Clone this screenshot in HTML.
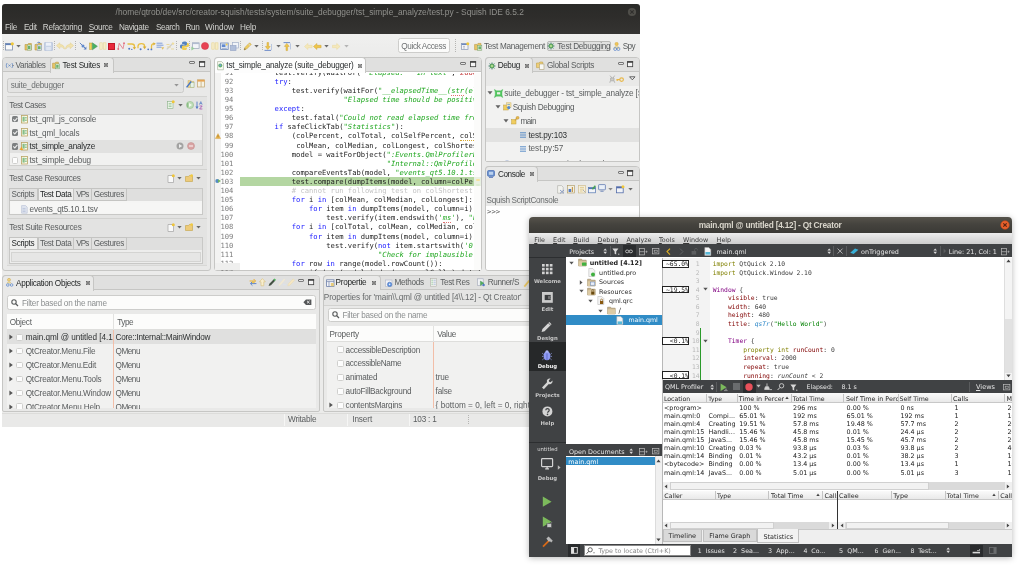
<!DOCTYPE html>
<html><head><meta charset="utf-8"><title>Squish IDE and Qt Creator</title>
<style>
html,body{margin:0;padding:0;background:#fff}
body{width:1024px;height:565px;position:relative;overflow:hidden;font-family:"Liberation Sans",sans-serif;font-size:8.2px;color:#555;line-height:12px}
div,span{box-sizing:border-box}
#root{position:absolute;left:0;top:0;width:1024px;height:565px;overflow:hidden;will-change:transform}
svg{overflow:visible}
.si{opacity:.86}
.t{position:absolute;white-space:pre;line-height:12px}
.c{position:absolute;white-space:pre;font-family:"DejaVu Sans Mono","Liberation Mono",monospace;font-size:7.16px;line-height:10px;color:#1c1c1c}
.c b.kw{font-weight:normal;color:#1a1aff}
.c i.st{color:#22a822}
.c .sq{border-bottom:0.7px dotted #e07070}
.c .sqy{border-bottom:0.7px dotted #d8a830}
.ln{position:absolute;left:214px;width:19.4px;text-align:right;white-space:pre;font-family:"DejaVu Sans Mono","Liberation Mono",monospace;font-size:7.16px;line-height:10px;color:#7c7c7c}

.q{position:absolute;white-space:pre;font-family:"DejaVu Sans Mono","Liberation Mono",monospace;font-size:6.34px;line-height:9px;color:#3a3a3a}
.q .o{color:#808000}.q .p{color:#800080}.q .r{color:#800000}.q .b{color:#2985c7;font-style:italic}.q .g{color:#008000}
.qn{position:absolute;left:689.5px;width:10px;text-align:right;white-space:pre;font-family:"DejaVu Sans Mono","Liberation Mono",monospace;font-size:6.34px;line-height:9px;color:#b8b8b8}
</style></head><body>
<div id="root">
<div style="position:absolute;left:2px;top:4px;width:638px;height:423px;background:#ebebea;border-radius:3px 3px 0 0"></div>
<div style="position:absolute;left:2px;top:4px;width:638px;height:30px;background:linear-gradient(#2a2a28,#2e2d2b 45%,#353432);border-radius:3px 3px 0 0"></div>
<span class="t" style="left:115.60px;color:#90908c;letter-spacing:-0.009px;top:6px;font-size:8.4px;">/home/qtrob/dev/src/creator-squish/tests/system/suite_debugger/tst_simple_analyze/test.py - Squish IDE 6.5.2</span>
<svg class="si" style="position:absolute;left:627.3px;top:7px" width="10" height="10" viewBox="0 0 10 10"><circle cx="5" cy="5" r="4.1" fill="#55544f"/><path d="M3.3 3.3l3.4 3.4M6.7 3.3l-3.4 3.4" stroke="#302f2d" stroke-width="1.1"/></svg>
<span class="t" style="left:5.00px;color:#d2d2cf;letter-spacing:-0.301px;top:22px;font-size:8.2px;">File</span>
<span class="t" style="left:24.00px;color:#d2d2cf;letter-spacing:-0.402px;top:22px;font-size:8.2px;">Edit</span>
<span class="t" style="left:42.80px;color:#d2d2cf;letter-spacing:-0.245px;top:22px;font-size:8.2px;">Refac<u>t</u>oring</span>
<span class="t" style="left:88.75px;color:#d2d2cf;letter-spacing:-0.367px;top:22px;font-size:8.2px;"><u>S</u>ource</span>
<span class="t" style="left:119.00px;color:#d2d2cf;letter-spacing:-0.322px;top:22px;font-size:8.2px;">Navigate</span>
<span class="t" style="left:156.00px;color:#d2d2cf;letter-spacing:-0.426px;top:22px;font-size:8.2px;">Search</span>
<span class="t" style="left:185.60px;color:#d2d2cf;letter-spacing:-0.410px;top:22px;font-size:8.2px;">Run</span>
<span class="t" style="left:205.00px;color:#d2d2cf;letter-spacing:-0.062px;top:22px;font-size:8.2px;">Window</span>
<span class="t" style="left:240.00px;color:#d2d2cf;letter-spacing:-0.211px;top:22px;font-size:8.2px;">Help</span>
<div style="position:absolute;left:2px;top:34px;width:638px;height:23.5px;background:linear-gradient(#f0f0ef,#ebebea)"></div>
<div style="position:absolute;left:2.8px;top:41px;width:1px;height:10px;background:repeating-linear-gradient(#b4b4b2 0 1px,transparent 1px 2px)"></div><svg class="si" style="position:absolute;left:5.1px;top:41.6px" width="9" height="9" viewBox="0 0 9 9"><rect x="0.5" y="1.5" width="7" height="6.5" fill="#fdfdfd" stroke="#6c7fa0" stroke-width="0.8"/><rect x="0.5" y="1.5" width="7" height="1.6" fill="#4a6fb0"/><circle cx="7.3" cy="1.8" r="1.6" fill="#f2c21c"/></svg><svg class="si" style="position:absolute;left:15.8px;top:43.9px" width="5" height="5" viewBox="0 0 5 5"><path d="M0.3 1h4.4L2.5 3.6z" fill="#555"/></svg><svg class="si" style="position:absolute;left:24px;top:41.6px" width="9" height="9" viewBox="0 0 9 9"><path d="M1 2.5h2.6l0.8-1h3v6.5h-6.4z" fill="#e8c050" stroke="#b08a28" stroke-width="0.6"/><rect x="3.2" y="3" width="4" height="5" fill="#e9f5e4" stroke="#6a9a60" stroke-width="0.6"/><rect x="4" y="4" width="2.4" height="3" fill="#58a858"/></svg><svg class="si" style="position:absolute;left:34px;top:41.6px" width="9" height="9" viewBox="0 0 9 9"><path d="M1 2.5h2.6l0.8-1h3v6.5h-6.4z" fill="#e8c050" stroke="#b08a28" stroke-width="0.6"/><rect x="3.2" y="3" width="4.4" height="5.2" fill="#eef3fb" stroke="#7a8fb0" stroke-width="0.6"/><rect x="4" y="4.2" width="2.6" height="3" fill="#58a858"/><path d="M3 1.3a2 2 0 0 1 3.5 0" stroke="#3a62b0" stroke-width="0.9" fill="none"/></svg><svg class="si" style="position:absolute;left:43.8px;top:41.6px" width="9" height="9" viewBox="0 0 9 9"><rect x="0.7" y="0.7" width="7.6" height="7.6" fill="#c4d0e6" stroke="#a4b4d4" stroke-width="0.7"/><rect x="2" y="0.7" width="5" height="3" fill="#eef2fa"/><rect x="2.2" y="5" width="4.6" height="3.3" fill="#dfe6f4"/></svg><div style="position:absolute;left:53.8px;top:41px;width:1px;height:10px;background:repeating-linear-gradient(#b4b4b2 0 1px,transparent 1px 2px)"></div><svg class="si" style="position:absolute;left:55.8px;top:42.1px" width="9" height="8" viewBox="0 0 9 8"><path d="M0.5 3.6L3.8 0.8v1.8c3 0 4.6 1.4 4.6 4.6c-1-1.8-2.4-2.4-4.6-2.4v1.8z" fill="#f3e3a8" stroke="#e0c878" stroke-width="0.5"/></svg><svg class="si" style="position:absolute;left:64.8px;top:42.1px" width="9" height="8" viewBox="0 0 9 8"><path d="M8.5 3.6L5.2 0.8v1.8c-3 0-4.6 1.4-4.6 4.6c1-1.8 2.4-2.4 4.6-2.4v1.8z" fill="#f3e3a8" stroke="#e0c878" stroke-width="0.5"/></svg><div style="position:absolute;left:75.1px;top:41px;width:1px;height:10px;background:repeating-linear-gradient(#b4b4b2 0 1px,transparent 1px 2px)"></div><svg class="si" style="position:absolute;left:78.5px;top:42.1px" width="8" height="8" viewBox="0 0 8 8"><path d="M0.8 0.8l6.2 6.2" stroke="#3a68b8" stroke-width="0.9"/><path d="M4.6 7.4l2.8 0-0-2.8z" fill="#3a68b8"/><circle cx="4" cy="4" r="1.5" fill="#4a7ac8"/></svg><svg class="si" style="position:absolute;left:88.5px;top:41.8px" width="9" height="8.6" viewBox="0 0 9 8.6"><rect x="0.5" y="1" width="2.4" height="6.5" fill="#f0d040" stroke="#b09020" stroke-width="0.5"/><path d="M3.4 0.8v7l5-3.5z" fill="#2fa84a" stroke="#1f7a34" stroke-width="0.5"/></svg><svg class="si" style="position:absolute;left:98.7px;top:42.1px" width="8" height="8" viewBox="0 0 8 8"><rect x="0.8" y="0.8" width="2.4" height="6.4" fill="#f8efc4" stroke="#e6d48a" stroke-width="0.6"/><rect x="4.6" y="0.8" width="2.4" height="6.4" fill="#f8efc4" stroke="#e6d48a" stroke-width="0.6"/></svg><div style="position:absolute;left:108.2px;top:42.7px;width:7px;height:7px;background:#e8283c;border:0.6px solid #c01828"></div><svg class="si" style="position:absolute;left:116.7px;top:41.85px" width="8" height="8.5" viewBox="0 0 8 8.5"><path d="M1 7.3l1.2-6 3.8 5.4 1.2-5.6" stroke="#e0566a" stroke-width="0.75" fill="none"/><circle cx="1.3" cy="7" r="0.9" fill="#e0566a"/><circle cx="7" cy="1.2" r="0.9" fill="#e0566a"/></svg><svg class="si" style="position:absolute;left:126.5px;top:41.8px" width="10" height="8.6" viewBox="0 0 10 8.6"><path d="M0.5 2h4.5c2 0 2.5 1 2.5 2.5v1.6" stroke="#e8b828" stroke-width="1.3" fill="none"/><path d="M5.6 5.2h3.6l-1.8 2.4z" fill="#d8a418"/><circle cx="2.2" cy="6.8" r="1" fill="#3a66c0"/><circle cx="4.8" cy="7.4" r="0.7" fill="#3a66c0"/></svg><svg class="si" style="position:absolute;left:136.5px;top:41.8px" width="10" height="8.6" viewBox="0 0 10 8.6"><path d="M1 6.2v-2c0-1.8 1.2-2.6 3.4-2.6c2 0 3.2 0.8 3.2 2.6v1" stroke="#e8b828" stroke-width="1.3" fill="none"/><path d="M5.8 4.6h3.6l-1.8 2.6z" fill="#d8a418"/><circle cx="3.6" cy="7.2" r="1" fill="#3a66c0"/></svg><svg class="si" style="position:absolute;left:146.5px;top:41.8px" width="9" height="8.6" viewBox="0 0 9 8.6"><path d="M4.5 7v-3c0-1.6 1-2.4 2.8-2.4" stroke="#e8b828" stroke-width="1.3" fill="none"/><path d="M6.4 0.2l2.4 1.6-2.4 1.6z" fill="#d8a418"/><circle cx="1.2" cy="7.3" r="0.9" fill="#3a66c0"/><circle cx="4.4" cy="7.4" r="0.9" fill="#3a66c0"/></svg><svg class="si" style="position:absolute;left:156.2px;top:41.9px" width="8.6" height="8.4" viewBox="0 0 8.6 8.4"><path d="M0.5 1.2h6M0.5 3.2h7M0.5 5.2h5" stroke="#6a90d8" stroke-width="1"/><path d="M5.2 5.2h3l-1.5 2.6z" fill="#e0b84a"/></svg><svg class="si" style="position:absolute;left:165.7px;top:41.9px" width="8.6" height="8.4" viewBox="0 0 8.6 8.4"><path d="M0.8 7.4l6.4-6.4" stroke="#c8c8c4" stroke-width="1.2"/><path d="M0.5 2.5h3M1 5h4M5 7h3" stroke="#e8d490" stroke-width="1"/><circle cx="7" cy="1.6" r="1.2" fill="#f0dc90"/></svg><div style="position:absolute;left:176.3px;top:41px;width:1px;height:10px;background:repeating-linear-gradient(#b4b4b2 0 1px,transparent 1px 2px)"></div><svg class="si" style="position:absolute;left:179.5px;top:41.35px" width="9" height="9.5" viewBox="0 0 9 9.5"><path d="M4.3 0.5c-2 0-2.2 0.8-2.2 1.6v1h2.4v0.5h-3.2c-1 0-1.3 0.9-1.3 2c0 1.2 0.4 2 1.3 2h0.8v-1.3c0-0.9 0.7-1.5 1.5-1.5h2.3c0.7 0 1.2-0.5 1.2-1.2v-1.5c0-0.9-0.9-1.6-2.8-1.6z" fill="#3a70b8"/><path d="M4.7 9c2 0 2.2-0.8 2.2-1.6v-1h-2.4v-0.5h3.2c1 0 1.3-0.9 1.3-2c0-1.2-0.4-2-1.3-2h-0.8v1.3c0 0.9-0.7 1.5-1.5 1.5h-2.3c-0.7 0-1.2 0.5-1.2 1.2v1.5c0 0.9 0.9 1.6 2.8 1.6z" fill="#f0c838"/></svg><div style="position:absolute;left:188.7px;top:41px;width:1px;height:10px;background:repeating-linear-gradient(#b4b4b2 0 1px,transparent 1px 2px)"></div><svg class="si" style="position:absolute;left:191px;top:41.6px" width="9" height="9" viewBox="0 0 9 9"><rect x="1.5" y="0.8" width="6.6" height="5.8" fill="#f4f6fa" stroke="#8a96b0" stroke-width="0.7"/><rect x="1.5" y="0.8" width="6.6" height="1.3" fill="#a8b4cc"/><path d="M0.4 4.4v4l3.2-2z" fill="#8cc890"/></svg><svg class="si" style="position:absolute;left:201.4px;top:42.1px" width="8" height="8" viewBox="0 0 8 8"><circle cx="4" cy="4" r="3.6" fill="#e8283c" stroke="#c41828" stroke-width="0.5"/></svg><svg class="si" style="position:absolute;left:211px;top:42.1px" width="8" height="8" viewBox="0 0 8 8"><rect x="0.8" y="0.8" width="2.4" height="6.4" fill="#f8ecc0" stroke="#e8d488" stroke-width="0.6"/><rect x="4.6" y="0.8" width="2.4" height="6.4" fill="#f8ecc0" stroke="#e8d488" stroke-width="0.6"/></svg><svg class="si" style="position:absolute;left:220.2px;top:41.9px" width="9" height="8.4" viewBox="0 0 9 8.4"><rect x="0.6" y="1" width="7.6" height="6.4" fill="#dfe8f6" stroke="#5a78b0" stroke-width="0.8"/><rect x="1.8" y="2.4" width="3.6" height="2.6" fill="#4a78c8"/><circle cx="6.6" cy="2.6" r="1" fill="#f0c838"/><path d="M1.8 6.4h5" stroke="#7a90b8" stroke-width="0.7"/></svg><svg class="si" style="position:absolute;left:230.2px;top:41.6px" width="9.2" height="9" viewBox="0 0 9.2 9"><rect x="2.6" y="0.6" width="6" height="5.4" fill="#f2f5fa" stroke="#98a6c4" stroke-width="0.7"/><rect x="0.6" y="3.6" width="5.4" height="4.8" fill="#a8b8d8" stroke="#8a9cc0" stroke-width="0.7"/></svg><div style="position:absolute;left:240.3px;top:41px;width:1px;height:10px;background:repeating-linear-gradient(#b4b4b2 0 1px,transparent 1px 2px)"></div><svg class="si" style="position:absolute;left:242.5px;top:41.6px" width="9" height="9" viewBox="0 0 9 9"><path d="M1 8l1-2.6 4.6-4.6 1.6 1.6-4.6 4.6z" fill="#f0c84a" stroke="#c09828" stroke-width="0.6"/><path d="M1 8l0.7-1.9 1.2 1.2z" fill="#6a5a3a"/><path d="M5.4 1.8l1.6 1.6" stroke="#d8d8d8" stroke-width="1"/></svg><svg class="si" style="position:absolute;left:253.8px;top:43.9px" width="5" height="5" viewBox="0 0 5 5"><path d="M0.3 1h4.4L2.5 3.6z" fill="#555"/></svg><div style="position:absolute;left:262.2px;top:41px;width:1px;height:10px;background:repeating-linear-gradient(#b4b4b2 0 1px,transparent 1px 2px)"></div><svg class="si" style="position:absolute;left:263.5px;top:41.5px" width="8.4" height="9.2" viewBox="0 0 8.4 9.2"><path d="M3 0.5h1.6v4h1.6l-2.4 3-2.4-3h1.6z" fill="#f0c030" stroke="#c89818" stroke-width="0.5"/><path d="M0.5 8.4h6.6" stroke="#4a70c0" stroke-width="0.9"/><path d="M7.6 2v6" stroke="#9ab0d8" stroke-width="0.8"/></svg><svg class="si" style="position:absolute;left:275.5px;top:43.9px" width="5" height="5" viewBox="0 0 5 5"><path d="M0.3 1h4.4L2.5 3.6z" fill="#555"/></svg><svg class="si" style="position:absolute;left:282.6px;top:41.5px" width="8.4" height="9.2" viewBox="0 0 8.4 9.2"><path d="M3 8.6h1.6v-4.2h1.6l-2.4-3-2.4 3h1.6z" fill="#f0c030" stroke="#c89818" stroke-width="0.5"/><path d="M0.5 0.6h6.6" stroke="#4a70c0" stroke-width="0.9"/><path d="M7.6 1.4v6" stroke="#9ab0d8" stroke-width="0.8"/></svg><svg class="si" style="position:absolute;left:295px;top:43.9px" width="5" height="5" viewBox="0 0 5 5"><path d="M0.3 1h4.4L2.5 3.6z" fill="#555"/></svg><svg class="si" style="position:absolute;left:303.7px;top:42.6px" width="8.6" height="7" viewBox="0 0 8.6 7"><path d="M0.5 3.5l3.4-3v1.8h4.2v2.4h-4.2v1.8z" fill="#f6e8b4" stroke="#e8d48c" stroke-width="0.5"/></svg><svg class="si" style="position:absolute;left:312.7px;top:42.6px" width="8.6" height="7" viewBox="0 0 8.6 7"><path d="M0.5 3.5l3.4-3v1.8h4.2v2.4h-4.2v1.8z" fill="#f0c030" stroke="#c89818" stroke-width="0.5"/></svg><svg class="si" style="position:absolute;left:323.8px;top:43.9px" width="5" height="5" viewBox="0 0 5 5"><path d="M0.3 1h4.4L2.5 3.6z" fill="#555"/></svg><svg class="si" style="position:absolute;left:331.9px;top:42.6px" width="8.6" height="7" viewBox="0 0 8.6 7"><path d="M8.1 3.5l-3.4-3v1.8h-4.2v2.4h4.2v1.8z" fill="#f6e8b4" stroke="#e8d48c" stroke-width="0.5"/></svg><svg class="si" style="position:absolute;left:343.5px;top:43.9px" width="5" height="5" viewBox="0 0 5 5"><path d="M0.3 1h4.4L2.5 3.6z" fill="#aaa"/></svg><div style="position:absolute;left:397.5px;top:38px;width:52.2px;height:15px;background:#fbfbfa;border:1px solid #cdcdcb;border-radius:2.5px"></div><span class="t" style="left:401.30px;color:#6e7172;letter-spacing:-0.370px;top:41px;font-size:8.2px;">Quick Access</span><div style="position:absolute;left:454.5px;top:39px;width:1px;height:14px;background:repeating-linear-gradient(#b4b4b2 0 1px,transparent 1px 2px)"></div><svg class="si" style="position:absolute;left:461px;top:41.8px" width="8.6" height="8.6" viewBox="0 0 8.6 8.6"><rect x="0.6" y="1.6" width="6.4" height="6" fill="#f4f6fa" stroke="#7888a8" stroke-width="0.7"/><rect x="0.6" y="1.6" width="6.4" height="1.4" fill="#5878b8"/><path d="M2 4.4h2M2 6h2" stroke="#889" stroke-width="0.6"/><circle cx="6.8" cy="1.8" r="1.5" fill="#f2c21c"/></svg><svg class="si" style="position:absolute;left:473.7px;top:41.7px" width="8.6" height="8.8" viewBox="0 0 8.6 8.8"><path d="M0.6 2.4h2.6l0.8-1h3v6.4h-6.4z" fill="#e8c050" stroke="#b08a28" stroke-width="0.6"/><rect x="3.6" y="3.4" width="4.2" height="4.8" fill="#e9f5e4" stroke="#6a9a60" stroke-width="0.6"/><rect x="4.4" y="4.4" width="2.6" height="2.8" fill="#58a858"/></svg><span class="t" style="left:484.00px;color:#5a5d5e;letter-spacing:-0.273px;top:41px;font-size:8.2px;">Test Management</span><div style="position:absolute;left:547px;top:41px;width:64px;height:9.8px;border:1px solid #b9b9b7;border-radius:2px;background:#e1e1e0"></div><svg class="si" style="position:absolute;left:547.3px;top:41.8px" width="8" height="8" viewBox="0 0 8 8"><path d="M4 0.3v7.4M0.3 4h7.4M1.4 1.4l5.2 5.2M6.6 1.4l-5.2 5.2" stroke="#3a7a6a" stroke-width="0.7"/><circle cx="4" cy="4" r="2.3" fill="#58b048" stroke="#2a6a5a" stroke-width="0.5"/><circle cx="4" cy="4" r="0.9" fill="#c8e8a0"/></svg><span class="t" style="left:557.30px;color:#5a5d5e;letter-spacing:-0.279px;top:41px;font-size:8.2px;">Test Debugging</span><svg class="si" style="position:absolute;left:612.8px;top:41.6px" width="7.6" height="9" viewBox="0 0 7.6 9"><circle cx="3.6" cy="2" r="1.7" fill="#f0c040" stroke="#c09020" stroke-width="0.4"/><path d="M1.2 5.4c0-1.6 4.8-1.6 4.8 0v1h-4.8z" fill="#f6e6a8" stroke="#d0b060" stroke-width="0.4"/><circle cx="2.2" cy="7" r="1.5" fill="none" stroke="#4a78c8" stroke-width="0.8"/><circle cx="5.4" cy="7" r="1.5" fill="none" stroke="#4a78c8" stroke-width="0.8"/></svg><span class="t" style="left:622.70px;color:#5a5d5e;letter-spacing:-0.603px;top:41px;font-size:8.2px;">Spy</span>
<div style="position:absolute;left:2.4px;top:57.2px;width:208.2px;height:214.2px;background:#e9e9e8;border:1px solid #c6c6c4;border-radius:4px 4px 3px 3px"></div><div style="position:absolute;left:3.4px;top:58.2px;width:206.2px;height:14px;background:#e0e0df;border-bottom:1px solid #c6c6c4;border-radius:3px 3px 0 0"></div><div style="position:absolute;left:50.2px;top:57.2px;width:64.2px;height:16px;background:#e9e9e8;border:1px solid #c6c6c4;border-bottom:none;border-radius:4px 4px 0 0"></div><svg class="si" style="position:absolute;left:4.8px;top:61.7px" width="9" height="7" viewBox="0 0 9 7"><path d="M2.2 1c-1.2 1.2-1.2 3.8 0 5M6.8 1c1.2 1.2 1.2 3.8 0 5" stroke="#4a78c0" stroke-width="0.8" fill="none"/><path d="M3.4 2.6l2.2 1.8M5.6 2.6l-2.2 1.8" stroke="#4a78c0" stroke-width="0.7"/><path d="M7.4 3.5h1.4" stroke="#666" stroke-width="0.8"/></svg><span class="t" style="left:15.60px;color:#5a5d5e;letter-spacing:-0.403px;top:60px;font-size:8.2px;">Variables</span><svg class="si" style="position:absolute;left:52.1px;top:61.1px" width="8.4" height="8.4" viewBox="0 0 8.4 8.4"><path d="M0.6 2.2h2.4l0.8-1h2.6v6h-5.8z" fill="#e8c050" stroke="#b08a28" stroke-width="0.6"/><rect x="3.4" y="3" width="4" height="4.8" fill="#e9f5e4" stroke="#6a9a60" stroke-width="0.6"/><rect x="4.2" y="4" width="2.4" height="2.8" fill="#58a858"/></svg><span class="t" style="left:62.50px;color:#1e2122;letter-spacing:-0.232px;top:60px;font-size:8.2px;">Test Suites</span><svg class="si" style="position:absolute;left:103.3px;top:62.4px" width="6" height="6" viewBox="0 0 6 6"><path d="M1 1l4 4M5 1l-4 4" stroke="#4a4a4a" stroke-width="0.75" fill="none"/><rect x="1.6" y="1.6" width="2.8" height="2.8" fill="none" stroke="#4a4a4a" stroke-width="0.6"/></svg><svg class="si" style="position:absolute;left:189px;top:61.35px" width="6" height="2.9" viewBox="0 0 6 2.9"><rect x="0.5" y="0.5" width="5" height="1.9" rx="0.5" fill="#f6f6f6" stroke="#333" stroke-width="0.75"/></svg><svg class="si" style="position:absolute;left:198.9px;top:61.1px" width="6.2" height="6.2" viewBox="0 0 6.2 6.2"><rect x="0.5" y="0.9" width="5.2" height="4.8" fill="#fafafa" stroke="#222" stroke-width="0.8"/><path d="M0.1 0.9h6" stroke="#222" stroke-width="1.5"/></svg><div style="position:absolute;left:7.4px;top:78px;width:176.4px;height:14.8px;background:#e4e4e3;border:1px solid #cbcbc9;border-radius:2.5px"></div><span class="t" style="left:10.70px;color:#6c6f70;letter-spacing:-0.232px;top:80px;font-size:8.2px;">suite_debugger</span><svg class="si" style="position:absolute;left:174.3px;top:83.1px" width="5" height="5" viewBox="0 0 5 5"><path d="M0.3 1h4.4L2.5 3.6z" fill="#888"/></svg><svg class="si" style="position:absolute;left:186px;top:78.8px" width="9" height="9.4" viewBox="0 0 9 9.4"><path d="M2 1.5h3l1 1h2v6h-6z" fill="#f0d080" stroke="#c8a850" stroke-width="0.5"/><rect x="4.4" y="3.6" width="3.6" height="4.6" fill="#e8f4e8" stroke="#8ab088" stroke-width="0.5"/><path d="M0.6 8.4l4.6-6" stroke="#2a62c0" stroke-width="1.5"/></svg><svg class="si" style="position:absolute;left:197.4px;top:79.1px" width="8.2" height="8.8" viewBox="0 0 8.2 8.8"><rect x="0.6" y="0.8" width="7" height="7.2" fill="#f8f4e4" stroke="#b89858" stroke-width="0.7"/><rect x="0.6" y="0.8" width="7" height="1.8" fill="#e89838"/><path d="M4.1 2.6v5.4" stroke="#b89858" stroke-width="0.7"/></svg><div style="position:absolute;left:7px;top:95.8px;width:199.6px;height:170px;background:#e3e3e2;border-top:1px solid #d4d4d2;border-bottom:1px solid #d8d8d6"></div><span class="t" style="left:9.20px;color:#5a5d5e;letter-spacing:-0.390px;top:100px;font-size:8.2px;">Test Cases</span><svg class="si" style="position:absolute;left:167.3px;top:100.3px" width="8" height="9" viewBox="0 0 8 9"><rect x="0.6" y="1.6" width="5.4" height="6.8" fill="#f4faf0" stroke="#7aa878" stroke-width="0.6"/><path d="M1.6 3.4h3M1.6 5h3M1.6 6.6h3" stroke="#58a858" stroke-width="0.6"/><circle cx="6.2" cy="1.8" r="1.5" fill="#f2c21c"/></svg><svg class="si" style="position:absolute;left:177.8px;top:102.8px" width="5" height="5" viewBox="0 0 5 5"><path d="M0.3 1h4.4L2.5 3.6z" fill="#555"/></svg><svg class="si" style="position:absolute;left:185.5px;top:100.9px" width="8" height="8" viewBox="0 0 8 8"><circle cx="4" cy="4" r="3.6" fill="#b8dcb0" stroke="#88b880" stroke-width="0.6"/><path d="M3 2v4l3-2z" fill="#f4fff0"/><path d="M1.8 1.8v4.4" stroke="#58a050" stroke-width="0.8"/></svg><svg class="si" style="position:absolute;left:195.3px;top:100.6px" width="8" height="8.6" viewBox="0 0 8 8.6"><path d="M2 0.6v7" stroke="#3a68c0" stroke-width="0.9"/><path d="M0.4 5.6l1.6 2.2 1.6-2.2z" fill="#3a68c0"/><path d="M4.4 3.6l1.4-3 1.4 3M4.9 2.6h1.8" stroke="#3a68c0" stroke-width="0.7" fill="none"/><path d="M4.6 5h2.6l-2.6 3h2.8" stroke="#9a38a8" stroke-width="0.8" fill="none"/></svg><div style="position:absolute;left:9px;top:113.6px;width:194.4px;height:52.6px;background:#f1f1f0;border:1px solid #d0d0ce"></div><div style="position:absolute;left:10px;top:139.6px;width:192.4px;height:13.6px;background:#e1e1e0"></div><div style="position:absolute;left:11.5px;top:115.5px;width:6.6px;height:6.6px;background:#7c7f80;border-radius:1.5px"></div><svg class="si" style="position:absolute;left:11.5px;top:115.5px" width="6.6" height="6.6" viewBox="0 0 6.6 6.6"><path d="M1.3 3.4l1.5 1.5 2.6-3" stroke="#fff" stroke-width="1.1" fill="none"/></svg><svg class="si" style="position:absolute;left:20.8px;top:114.55px" width="7" height="8.5" viewBox="0 0 7 8.5"><rect x="0.5" y="0.5" width="6" height="7.5" fill="#fffbe6" stroke="#b09a50" stroke-width="0.8"/><rect x="1.5" y="1.8" width="2.2" height="4.8" fill="#3a9a4a" opacity="0.7"/><path d="M4 2.5h1.8M4 4h1.8M4 5.5h1.8" stroke="#5aa86a" stroke-width="0.7"/></svg><span class="t" style="left:29.40px;color:#5a5d5e;letter-spacing:-0.158px;top:114px;font-size:8.2px;">tst_qml_js_console</span><div style="position:absolute;left:11.5px;top:129.4px;width:6.6px;height:6.6px;background:#7c7f80;border-radius:1.5px"></div><svg class="si" style="position:absolute;left:11.5px;top:129.4px" width="6.6" height="6.6" viewBox="0 0 6.6 6.6"><path d="M1.3 3.4l1.5 1.5 2.6-3" stroke="#fff" stroke-width="1.1" fill="none"/></svg><svg class="si" style="position:absolute;left:20.8px;top:128.45px" width="7" height="8.5" viewBox="0 0 7 8.5"><rect x="0.5" y="0.5" width="6" height="7.5" fill="#fffbe6" stroke="#b09a50" stroke-width="0.8"/><rect x="1.5" y="1.8" width="2.2" height="4.8" fill="#3a9a4a" opacity="0.7"/><path d="M4 2.5h1.8M4 4h1.8M4 5.5h1.8" stroke="#5aa86a" stroke-width="0.7"/></svg><span class="t" style="left:29.40px;color:#5a5d5e;letter-spacing:-0.135px;top:128px;font-size:8.2px;">tst_qml_locals</span><div style="position:absolute;left:11.5px;top:143.1px;width:6.6px;height:6.6px;background:#7c7f80;border-radius:1.5px"></div><svg class="si" style="position:absolute;left:11.5px;top:143.1px" width="6.6" height="6.6" viewBox="0 0 6.6 6.6"><path d="M1.3 3.4l1.5 1.5 2.6-3" stroke="#fff" stroke-width="1.1" fill="none"/></svg><svg class="si" style="position:absolute;left:20.8px;top:142.15px" width="7" height="8.5" viewBox="0 0 7 8.5"><rect x="0.5" y="0.5" width="6" height="7.5" fill="#fffbe6" stroke="#b09a50" stroke-width="0.8"/><rect x="1.5" y="1.8" width="2.2" height="4.8" fill="#3a9a4a" opacity="0.7"/><path d="M4 2.5h1.8M4 4h1.8M4 5.5h1.8" stroke="#5aa86a" stroke-width="0.7"/></svg><span class="t" style="left:29.40px;color:#2a2d2e;letter-spacing:-0.224px;top:141px;font-size:8.2px;">tst_simple_analyze</span><div style="position:absolute;left:11.5px;top:157.1px;width:6.6px;height:6.6px;background:#fdfdfd;border:1px solid #cfcfcd;border-radius:1.5px"></div><svg class="si" style="position:absolute;left:20.8px;top:156.15px" width="7" height="8.5" viewBox="0 0 7 8.5"><rect x="0.5" y="0.5" width="6" height="7.5" fill="#fffbe6" stroke="#b09a50" stroke-width="0.8"/><rect x="1.5" y="1.8" width="2.2" height="4.8" fill="#3a9a4a" opacity="0.7"/><path d="M4 2.5h1.8M4 4h1.8M4 5.5h1.8" stroke="#5aa86a" stroke-width="0.7"/></svg><span class="t" style="left:29.40px;color:#5a5d5e;letter-spacing:-0.162px;top:155px;font-size:8.2px;">tst_simple_debug</span><svg class="si" style="position:absolute;left:19.4px;top:146.4px" width="4.4" height="4.4" viewBox="0 0 4.4 4.4"><path d="M0.4 4l2-3.6 2 3.6z" fill="#f0a020"/></svg><svg class="si" style="position:absolute;left:176px;top:142.4px" width="8" height="8" viewBox="0 0 8 8"><circle cx="4" cy="4" r="3.5" fill="#9a9a98"/><path d="M3 2v4l3.2-2z" fill="#f0f0f0"/></svg><svg class="si" style="position:absolute;left:186.8px;top:142.4px" width="8" height="8" viewBox="0 0 8 8"><circle cx="4" cy="4" r="3.5" fill="#d89a9a" stroke="#b87878" stroke-width="0.5"/><path d="M2 4h4" stroke="#fbeaea" stroke-width="1.2"/></svg><div style="position:absolute;left:7px;top:169.2px;width:199.6px;height:1px;background:#d2d2d0"></div><span class="t" style="left:9.20px;color:#5a5d5e;letter-spacing:-0.338px;top:173px;font-size:8.2px;">Test Case Resources</span><svg class="si" style="position:absolute;left:166.6px;top:174px" width="8" height="9" viewBox="0 0 8 9"><path d="M1 1.5h4l1.5 1.5v5.5h-5.5z" fill="#fdfdfd" stroke="#9a9a9a" stroke-width="0.7"/><circle cx="6.3" cy="1.8" r="1.5" fill="#f0c020"/></svg><svg class="si" style="position:absolute;left:176.8px;top:176.4px" width="5" height="5" viewBox="0 0 5 5"><path d="M0.3 1h4.4L2.5 3.6z" fill="#555"/></svg><svg class="si" style="position:absolute;left:184.75px;top:174.25px" width="8.5" height="8.5" viewBox="0 0 8.5 8.5"><path d="M0.5 2.5h3l0.8-1h3.2v6h-7z" fill="#f0c868" stroke="#c09a30" stroke-width="0.6"/><circle cx="6.6" cy="1.6" r="1.3" fill="#f4c828"/></svg><svg class="si" style="position:absolute;left:196.3px;top:176.4px" width="5" height="5" viewBox="0 0 5 5"><path d="M0.3 1h4.4L2.5 3.6z" fill="#555"/></svg><div style="position:absolute;left:9.2px;top:187.5px;width:194.2px;height:27.4px;background:#dfdfde;border:1px solid #c8c8c6"></div><div style="position:absolute;left:9.2px;top:187.5px;width:29.3px;height:13.2px;border:1px solid #c4c4c2;background:#e1e1e0"></div><span class="t" style="left:11.50px;color:#5a5d5e;letter-spacing:-0.333px;top:189px;font-size:8.2px;">Scripts</span><div style="position:absolute;left:37.5px;top:187.5px;width:36.5px;height:13.2px;border:1px solid #c4c4c2;background:#efefee"></div><span class="t" style="left:39.90px;color:#1e2122;letter-spacing:-0.344px;top:189px;font-size:8.2px;">Test Data</span><div style="position:absolute;left:73px;top:187.5px;width:18.7px;height:13.2px;border:1px solid #c4c4c2;background:#e1e1e0"></div><span class="t" style="left:76.20px;color:#5a5d5e;letter-spacing:-0.877px;top:189px;font-size:8.2px;">VPs</span><div style="position:absolute;left:90.7px;top:187.5px;width:36.3px;height:13.2px;border:1px solid #c4c4c2;background:#e1e1e0"></div><span class="t" style="left:93.70px;color:#5a5d5e;letter-spacing:-0.377px;top:189px;font-size:8.2px;">Gestures</span><div style="position:absolute;left:10.2px;top:200.7px;width:192.2px;height:13.2px;background:#f5f5f4"></div><div style="position:absolute;left:11.4px;top:202.5px;width:189.8px;height:10.6px;background:#f6f6f5"></div><svg class="si" style="position:absolute;left:20.8px;top:204.6px" width="6.8" height="8.8" viewBox="0 0 6.8 8.8"><path d="M0.6 0.6h4l1.6 1.6v6h-5.6z" fill="#dfe4f0" stroke="#a8b4cc" stroke-width="0.6"/><path d="M1.6 3.4h3M1.6 5h3M1.6 6.6h3" stroke="#8a9ac0" stroke-width="0.5"/></svg><span class="t" style="left:29.60px;color:#5a5d5e;letter-spacing:-0.153px;top:204px;font-size:8.2px;">events_qt5.10.1.tsv</span><div style="position:absolute;left:7px;top:218.3px;width:199.6px;height:1px;background:#d2d2d0"></div><span class="t" style="left:9.20px;color:#5a5d5e;letter-spacing:-0.254px;top:222px;font-size:8.2px;">Test Suite Resources</span><svg class="si" style="position:absolute;left:166.6px;top:222.9px" width="8" height="9" viewBox="0 0 8 9"><path d="M1 1.5h4l1.5 1.5v5.5h-5.5z" fill="#fdfdfd" stroke="#9a9a9a" stroke-width="0.7"/><circle cx="6.3" cy="1.8" r="1.5" fill="#f0c020"/></svg><svg class="si" style="position:absolute;left:176.8px;top:225.3px" width="5" height="5" viewBox="0 0 5 5"><path d="M0.3 1h4.4L2.5 3.6z" fill="#555"/></svg><svg class="si" style="position:absolute;left:184.75px;top:223.15px" width="8.5" height="8.5" viewBox="0 0 8.5 8.5"><path d="M0.5 2.5h3l0.8-1h3.2v6h-7z" fill="#f0c868" stroke="#c09a30" stroke-width="0.6"/><circle cx="6.6" cy="1.6" r="1.3" fill="#f4c828"/></svg><svg class="si" style="position:absolute;left:196.3px;top:225.3px" width="5" height="5" viewBox="0 0 5 5"><path d="M0.3 1h4.4L2.5 3.6z" fill="#555"/></svg><div style="position:absolute;left:9.2px;top:236.5px;width:194.2px;height:27.4px;background:#dfdfde;border:1px solid #c8c8c6"></div><div style="position:absolute;left:9.2px;top:236.5px;width:29.3px;height:13.2px;border:1px solid #c4c4c2;background:#efefee"></div><span class="t" style="left:11.50px;color:#1e2122;letter-spacing:-0.333px;top:238px;font-size:8.2px;">Scripts</span><div style="position:absolute;left:37.5px;top:236.5px;width:36.5px;height:13.2px;border:1px solid #c4c4c2;background:#e1e1e0"></div><span class="t" style="left:39.90px;color:#5a5d5e;letter-spacing:-0.344px;top:238px;font-size:8.2px;">Test Data</span><div style="position:absolute;left:73px;top:236.5px;width:18.7px;height:13.2px;border:1px solid #c4c4c2;background:#e1e1e0"></div><span class="t" style="left:76.20px;color:#5a5d5e;letter-spacing:-0.877px;top:238px;font-size:8.2px;">VPs</span><div style="position:absolute;left:90.7px;top:236.5px;width:36.3px;height:13.2px;border:1px solid #c4c4c2;background:#e1e1e0"></div><span class="t" style="left:93.70px;color:#5a5d5e;letter-spacing:-0.377px;top:238px;font-size:8.2px;">Gestures</span><div style="position:absolute;left:10.2px;top:249.7px;width:192.2px;height:13.2px;background:#ededec"></div><div style="position:absolute;left:11.4px;top:251.5px;width:189.8px;height:10.4px;background:#e6e6e5;border:1px solid #d4d4d2"></div>
<div style="position:absolute;left:213.6px;top:57.2px;width:268px;height:214.2px;background:#fff;border:1px solid #c6c6c4;border-radius:4px 4px 3px 3px"></div><div style="position:absolute;left:214.6px;top:58.2px;width:266px;height:14px;background:#e0e0df;border-bottom:1px solid #c6c6c4;border-radius:3px 3px 0 0"></div><div style="position:absolute;left:213.6px;top:57.2px;width:152.7px;height:16px;background:#fdfdfd;border:1px solid #c6c6c4;border-bottom:none;border-radius:4px 4px 0 0"></div><svg class="si" style="position:absolute;left:216.5px;top:60.7px" width="7" height="9.4" viewBox="0 0 7 9.4"><path d="M0.6 0.6h4l1.8 1.8v6.4h-5.8z" fill="#fdfdf4" stroke="#8a9a78" stroke-width="0.6"/><circle cx="3.3" cy="4.6" r="2" fill="#4aa858"/><circle cx="3.3" cy="4.2" r="0.9" fill="#5a88d8"/></svg><span class="t" style="left:226.30px;color:#2a2d2e;letter-spacing:-0.189px;top:60px;font-size:8.2px;">tst_simple_analyze (suite_debugger)</span><svg class="si" style="position:absolute;left:357px;top:62.6px" width="6" height="6" viewBox="0 0 6 6"><path d="M1 1l4 4M5 1l-4 4" stroke="#4a4a4a" stroke-width="0.75" fill="none"/><rect x="1.6" y="1.6" width="2.8" height="2.8" fill="none" stroke="#4a4a4a" stroke-width="0.6"/></svg><svg class="si" style="position:absolute;left:459.9px;top:61.55px" width="6" height="2.9" viewBox="0 0 6 2.9"><rect x="0.5" y="0.5" width="5" height="1.9" rx="0.5" fill="#f6f6f6" stroke="#333" stroke-width="0.75"/></svg><svg class="si" style="position:absolute;left:469.9px;top:61.3px" width="6.2" height="6.2" viewBox="0 0 6.2 6.2"><rect x="0.5" y="0.9" width="5.2" height="4.8" fill="#fafafa" stroke="#222" stroke-width="0.8"/><path d="M0.1 0.9h6" stroke="#222" stroke-width="1.5"/></svg><div style="position:absolute;left:214.6px;top:73px;width:266.4px;height:197.5px;overflow:hidden" class="code"><div style="position:absolute;left:-214.6px;top:-73px"><div style="position:absolute;left:214.6px;top:73px;width:6.4px;height:197px;background:#f3f3f2"></div><div style="position:absolute;left:240px;top:177.1px;width:234.4px;height:8.5px;background:#b4d6a2"></div><span class="ln" style="top:68px">91</span><span class="ln" style="top:77px">92</span><span class="ln" style="top:86px">93</span><span class="ln" style="top:95px">94</span><span class="ln" style="top:104px">95</span><span class="ln" style="top:113px">96</span><span class="ln" style="top:122px">97</span><span class="ln" style="top:131px">98</span><span class="ln" style="top:141px">99</span><span class="ln" style="top:150px">100</span><span class="ln" style="top:159px">101</span><span class="ln" style="top:168px">102</span><span class="ln" style="top:177px">103</span><span class="ln" style="top:186px">104</span><span class="ln" style="top:195px">105</span><span class="ln" style="top:204px">106</span><span class="ln" style="top:213px">107</span><span class="ln" style="top:222px">108</span><span class="ln" style="top:232px">109</span><span class="ln" style="top:241px">110</span><span class="ln" style="top:250px">111</span><span class="ln" style="top:259px">112</span><span class="ln" style="top:268px">113</span><span class="c" style="left:274.58px;top:68px;">test.verify(waitFor(<i class="st">'&quot;Elapsed: &quot; in text'</i>, <span style="color:#c03030">20000)</span></span><span class="c" style="left:274.58px;top:77px;"><b class="kw">try</b>:</span><span class="c" style="left:291.82px;top:86px;">test.verify(waitFor(<i class="st">"__elapsedTime__(<span class="sq">str</span>(elapsedLabel.text)) &gt; 0"</i></span><span class="c" style="left:343.54px;top:95px;"><i class="st">"Elapsed time should be positive in string '%s'"</i></span><span class="c" style="left:274.58px;top:104px;"><b class="kw">except</b>:</span><span class="c" style="left:291.82px;top:113px;">test.fatal(<i class="st">"Could not read elapsed time from '%s'"</i></span><span class="c" style="left:274.58px;top:122px;"><b class="kw">if</b> safeClickTab(<i class="st">"Statistics"</i>):</span><span class="c" style="left:291.82px;top:131px;">(colPercent, colTotal, colSelfPercent, <span class="sqy">colSelf</span>, colCalls,</span><span class="c" style="left:296.13px;top:141px;">colMean, colMedian, colLongest, colShortest) = range(2, 11)</span><span class="c" style="left:291.82px;top:150px;">model = waitForObject(<i class="st">":Events.QmlProfilerEventsTable_QmlProfiler::"</i></span><span class="c" style="left:386.64px;top:159px;"><i class="st">"Internal::QmlProfilerStatisticsMainView"</i></span><span class="c" style="left:291.82px;top:168px;">compareEventsTab(model, <i class="st">"events_qt5.10.1.tsv"</i>)</span><span class="c" style="left:291.82px;top:177px;">test.compare(dumpItems(model, column=colPercent)[0], '100 %')</span><span class="c" style="left:291.82px;top:186px;"><span style="color:#c4c4c4"># cannot run following test on colShortest (unstable)</span></span><span class="c" style="left:291.82px;top:195px;"><b class="kw">for</b> i <b class="kw">in</b> [colMean, colMedian, colLongest]:</span><span class="c" style="left:309.06px;top:204px;"><b class="kw">for</b> item <b class="kw">in</b> dumpItems(model, column=i)[1:5]:</span><span class="c" style="left:326.30px;top:213px;">test.verify(item.endswith(<i class="st">'<span class="sq">ms</span>'</i>), <i class="st">"Found unexpected unit"</i></span><span class="c" style="left:291.82px;top:222px;"><b class="kw">for</b> i <b class="kw">in</b> [colTotal, colMean, colMedian, colLongest, colShortest]:</span><span class="c" style="left:309.06px;top:232px;"><b class="kw">for</b> item <b class="kw">in</b> dumpItems(model, column=i):</span><span class="c" style="left:326.30px;top:241px;">test.verify(<b class="kw">not</b> item.startswith(<i class="st">'0.000 '</i>),</span><span class="c" style="left:378.02px;top:250px;"><i class="st">"Check for implausible durations (0.000 ...)"</i></span><span class="c" style="left:291.82px;top:259px;"><b class="kw">for</b> row <b class="kw">in</b> range(model.rowCount()):</span><span class="c" style="left:309.06px;top:268px;">if (str(model.index(row, colCalls).data()) == 1):</span><div style="position:absolute;left:474.2px;top:73px;width:7px;height:197px;background:#fbfbfa"></div><div style="position:absolute;left:474.2px;top:177.1px;width:7px;height:8.5px;background:#e9f1e2"></div><div style="position:absolute;left:475.6px;top:178.8px;width:4.4px;height:2.2px;background:#f6e2a0;border-radius:1px"></div><div style="position:absolute;left:475.6px;top:183.6px;width:4.4px;height:2.2px;background:#dcecd0;border-radius:1px"></div><div style="position:absolute;left:214.6px;top:263px;width:25px;height:7px;background:#efefee"></div><svg class="si" style="position:absolute;left:214.7px;top:132.8px" width="6" height="6" viewBox="0 0 6 6"><path d="M0.4 5.6l2.6-5 2.6 5z" fill="#f0b030" stroke="#c88818" stroke-width="0.4"/><path d="M3 2.2v1.8M3 4.6v0.5" stroke="#5a3a00" stroke-width="0.6"/></svg><svg class="si" style="position:absolute;left:214.5px;top:178.3px" width="6.4" height="6" viewBox="0 0 6.4 6"><circle cx="2.2" cy="3" r="1.9" fill="#3a78b8"/><path d="M3 1.2l3 1.8-3 1.8z" fill="#58a848"/></svg></div></div>
<div style="position:absolute;left:484.5px;top:57.2px;width:155.1px;height:105px;background:#e9e9e8;border:1px solid #c6c6c4;border-radius:4px 4px 2px 2px;overflow:hidden"></div><div style="position:absolute;left:485.5px;top:58.2px;width:153.1px;height:14px;background:#e0e0df;border-bottom:1px solid #c6c6c4;border-radius:3px 3px 0 0"></div><div style="position:absolute;left:484.5px;top:57.2px;width:48.7px;height:16px;background:#e9e9e8;border:1px solid #c6c6c4;border-bottom:none;border-radius:4px 4px 0 0"></div><svg class="si" style="position:absolute;left:487.6px;top:61.5px" width="8" height="8" viewBox="0 0 8 8"><path d="M4 0.3v7.4M0.3 4h7.4M1.4 1.4l5.2 5.2M6.6 1.4l-5.2 5.2" stroke="#3a7a6a" stroke-width="0.7"/><circle cx="4" cy="4" r="2.3" fill="#58b048" stroke="#2a6a5a" stroke-width="0.5"/><circle cx="4" cy="4" r="0.9" fill="#c8e8a0"/></svg><span class="t" style="left:497.70px;color:#1e2122;letter-spacing:-0.408px;top:60px;font-size:8.2px;">Debug</span><svg class="si" style="position:absolute;left:523.7px;top:62.5px" width="6" height="6" viewBox="0 0 6 6"><path d="M1 1l4 4M5 1l-4 4" stroke="#4a4a4a" stroke-width="0.75" fill="none"/><rect x="1.6" y="1.6" width="2.8" height="2.8" fill="none" stroke="#4a4a4a" stroke-width="0.6"/></svg><svg class="si" style="position:absolute;left:536.3px;top:60.9px" width="8.6" height="9" viewBox="0 0 8.6 9"><path d="M0.5 2h2.6l0.8-1h2.8v5.6h-6.2z" fill="#f0cc68" stroke="#c09a30" stroke-width="0.6"/><rect x="3.6" y="3" width="4.4" height="5.4" fill="#fcfcf8" stroke="#a89868" stroke-width="0.6"/></svg><span class="t" style="left:546.90px;color:#5a5d5e;letter-spacing:-0.269px;top:60px;font-size:8.2px;">Global Scripts</span><svg class="si" style="position:absolute;left:617.5px;top:61.55px" width="6" height="2.9" viewBox="0 0 6 2.9"><rect x="0.5" y="0.5" width="5" height="1.9" rx="0.5" fill="#f6f6f6" stroke="#333" stroke-width="0.75"/></svg><svg class="si" style="position:absolute;left:627.1px;top:61.3px" width="6.2" height="6.2" viewBox="0 0 6.2 6.2"><rect x="0.5" y="0.9" width="5.2" height="4.8" fill="#fafafa" stroke="#222" stroke-width="0.8"/><path d="M0.1 0.9h6" stroke="#222" stroke-width="1.5"/></svg><svg class="si" style="position:absolute;left:608.5px;top:75.2px" width="6.6" height="8.4" viewBox="0 0 6.6 8.4"><path d="M1 0.6l2 2.4M5.6 0.6l-1.4 2.4M1.6 3h3.4v2.8h-3.4zM1.4 5.8l-0.6 2M5 5.8l0.8 2" stroke="#a8a8a6" stroke-width="0.9" fill="#c8c8c6"/></svg><svg class="si" style="position:absolute;left:616.2px;top:76.9px" width="8" height="5.4" viewBox="0 0 8 5.4"><circle cx="5.6" cy="2.6" r="1.8" fill="none" stroke="#e8b030" stroke-width="1.2"/><path d="M0.4 2.6h3.6M1.2 2.6v1.4" stroke="#e8b030" stroke-width="1.1"/></svg><svg class="si" style="position:absolute;left:628.5px;top:76.1px" width="6.6" height="5" viewBox="0 0 6.6 5"><path d="M0.6 0.8h5.4l-2.7 3z" fill="#f4f4f4" stroke="#222" stroke-width="0.8"/></svg><div style="position:absolute;left:485.5px;top:86.2px;width:153.1px;height:75px;background:#f2f2f1"></div><div style="position:absolute;left:485.5px;top:127.8px;width:153.1px;height:13.8px;background:#e2e2e1"></div><svg class="si" style="position:absolute;left:487.2px;top:90.2px" width="6" height="6" viewBox="0 0 6 6"><path d="M0.5 1.2h5L3 4.6z" fill="#4a4a4a"/></svg><svg class="si" style="position:absolute;left:494px;top:88.5px" width="9.2" height="9" viewBox="0 0 9.2 9"><path d="M0.4 0.4l2.2 1.4h4l2.2-1.4-0.8 2.6v3l0.8 2.6-2.2-1.4h-4l-2.2 1.4 0.8-2.6v-3z" fill="#38c048" stroke="#2aa83a" stroke-width="0.4"/><rect x="3" y="3.2" width="3.2" height="2.2" fill="#e8f4e4"/></svg><div style="position:absolute;left:484.5px;top:86px;width:154.10000000000002px;height:20px;overflow:hidden"><div style="position:absolute;left:-484.5px;top:-86px"><span class="t" style="left:504.20px;color:#5a5d5e;letter-spacing:-0.117px;top:88px;font-size:8.2px;">suite_debugger - tst_simple_analyze [Squ</span></div></div><svg class="si" style="position:absolute;left:495.2px;top:104px" width="6" height="6" viewBox="0 0 6 6"><path d="M0.5 1.2h5L3 4.6z" fill="#4a4a4a"/></svg><svg class="si" style="position:absolute;left:502.7px;top:102.3px" width="8.6" height="8.6" viewBox="0 0 8.6 8.6"><rect x="0.6" y="3" width="4.6" height="5" fill="#f0c848" stroke="#b89020" stroke-width="0.5"/><rect x="3.6" y="0.8" width="4.4" height="4.6" fill="#f8e8a8" stroke="#c8a040" stroke-width="0.5"/><circle cx="5.8" cy="5.6" r="1.6" fill="#3a78c8"/><path d="M4.4 2.4h2.6" stroke="#3a78c8" stroke-width="0.7"/></svg><span class="t" style="left:512.70px;color:#5a5d5e;letter-spacing:-0.333px;top:102px;font-size:8.2px;">Squish Debugging</span><svg class="si" style="position:absolute;left:503.3px;top:118px" width="6" height="6" viewBox="0 0 6 6"><path d="M0.5 1.2h5L3 4.6z" fill="#4a4a4a"/></svg><svg class="si" style="position:absolute;left:510.7px;top:116.3px" width="8.6" height="8.6" viewBox="0 0 8.6 8.6"><rect x="0.6" y="3.6" width="4.4" height="4.4" fill="#f0c848" stroke="#b89020" stroke-width="0.5"/><path d="M4 4.6l2.4-3.4" stroke="#c89a28" stroke-width="1.2"/><circle cx="6.6" cy="1.8" r="1.5" fill="#e8b030" stroke="#a87818" stroke-width="0.4"/></svg><span class="t" style="left:520.60px;color:#5a5d5e;letter-spacing:-0.588px;top:116px;font-size:8.2px;">main</span><svg class="si" style="position:absolute;left:520px;top:131.7px" width="6" height="6" viewBox="0 0 6 6"><path d="M0 0.8h6M0 3h6M0 5.2h6" stroke="#3a78c0" stroke-width="0.95"/></svg><span class="t" style="left:528.40px;color:#2e3132;letter-spacing:-0.133px;top:130px;font-size:8.2px;">test.py:103</span><svg class="si" style="position:absolute;left:520px;top:145.5px" width="6" height="6" viewBox="0 0 6 6"><path d="M0 0.8h6M0 3h6M0 5.2h6" stroke="#3a78c0" stroke-width="0.95"/></svg><span class="t" style="left:528.40px;color:#5a5d5e;letter-spacing:-0.052px;top:143px;font-size:8.2px;">test.py:57</span><div style="position:absolute;left:484.5px;top:150px;width:154.10000000000002px;height:11.3px;overflow:hidden"><div style="position:absolute;left:-484.5px;top:-150px"><svg class="si" style="position:absolute;left:504.5px;top:160.4px" width="4" height="6" viewBox="0 0 4 6"><rect x="0.5" y="0.5" width="3" height="5" fill="#8aa0c8"/></svg><span class="t" style="left:512.70px;color:#5a5d5e;letter-spacing:-0.252px;top:159px;font-size:8.2px;">Test Case: tst_simple_analyze</span></div></div>
<div style="position:absolute;left:484.5px;top:166.2px;width:155.1px;height:105.2px;background:#e9e9e8;border:1px solid #c6c6c4;border-radius:4px 4px 3px 3px"></div><div style="position:absolute;left:485.5px;top:167.2px;width:153.1px;height:14px;background:#e0e0df;border-bottom:1px solid #c6c6c4;border-radius:3px 3px 0 0"></div><div style="position:absolute;left:484.5px;top:166.2px;width:53.4px;height:16px;background:#e9e9e8;border:1px solid #c6c6c4;border-bottom:none;border-radius:4px 4px 0 0"></div><svg class="si" style="position:absolute;left:487.4px;top:170.4px" width="8" height="8" viewBox="0 0 8 8"><rect x="0.6" y="0.6" width="6.8" height="5.6" rx="0.8" fill="#5a88cc" stroke="#3a62b0" stroke-width="0.9"/><rect x="1.9" y="1.8" width="4.2" height="3" fill="#b4cef0"/><path d="M2 7.4h4" stroke="#3a62b0" stroke-width="0.9"/></svg><span class="t" style="left:498.00px;color:#1e2122;letter-spacing:-0.464px;top:169px;font-size:8.2px;">Console</span><svg class="si" style="position:absolute;left:529px;top:171.4px" width="6" height="6" viewBox="0 0 6 6"><path d="M1 1l4 4M5 1l-4 4" stroke="#4a4a4a" stroke-width="0.75" fill="none"/><rect x="1.6" y="1.6" width="2.8" height="2.8" fill="none" stroke="#4a4a4a" stroke-width="0.6"/></svg><svg class="si" style="position:absolute;left:617.7px;top:170.55px" width="6" height="2.9" viewBox="0 0 6 2.9"><rect x="0.5" y="0.5" width="5" height="1.9" rx="0.5" fill="#f6f6f6" stroke="#333" stroke-width="0.75"/></svg><svg class="si" style="position:absolute;left:627.2px;top:170.3px" width="6.2" height="6.2" viewBox="0 0 6.2 6.2"><rect x="0.5" y="0.9" width="5.2" height="4.8" fill="#fafafa" stroke="#222" stroke-width="0.8"/><path d="M0.1 0.9h6" stroke="#222" stroke-width="1.5"/></svg><svg class="si" style="position:absolute;left:557.4px;top:184.5px" width="8" height="9" viewBox="0 0 8 9"><path d="M0.6 0.6h4l1.6 1.6v6h-5.6z" fill="#f4f4f0" stroke="#a0a098" stroke-width="0.6"/><path d="M3 5l4 3.4M7 5l-4 3.4" stroke="#7088b8" stroke-width="0.9"/></svg><svg class="si" style="position:absolute;left:567.4px;top:184.7px" width="8.2" height="8.6" viewBox="0 0 8.2 8.6"><rect x="0.6" y="0.6" width="7" height="7.4" fill="#f4f0e0" stroke="#a08848" stroke-width="0.6"/><rect x="1.6" y="4" width="2.6" height="3" fill="#3a68c0"/><path d="M5.4 2v5" stroke="#c08828" stroke-width="1.1"/></svg><svg class="si" style="position:absolute;left:577.5px;top:184.7px" width="8.2" height="8.6" viewBox="0 0 8.2 8.6"><rect x="0.6" y="0.6" width="7" height="7.4" fill="#f6f0dc" stroke="#c8b070" stroke-width="0.6"/><path d="M2 2.4h4M2 4.2h4M2 6h2.6" stroke="#d8b860" stroke-width="0.7"/><path d="M5 5l2.6 2.6" stroke="#a0a0a0" stroke-width="0.9"/></svg><svg class="si" style="position:absolute;left:587.6px;top:184.8px" width="8.2" height="8.4" viewBox="0 0 8.2 8.4"><rect x="0.6" y="2.6" width="7" height="5.2" fill="#f4f6fa" stroke="#3a62a8" stroke-width="0.7"/><rect x="0.6" y="2.6" width="7" height="1.5" fill="#3a62a8"/><path d="M4.4 4.2l3-3.4" stroke="#2a9a3a" stroke-width="1.5"/></svg><svg class="si" style="position:absolute;left:597.6px;top:184.4px" width="8" height="8" viewBox="0 0 8 8"><rect x="0.6" y="0.6" width="6.8" height="5.2" rx="0.6" fill="#eaf0fa" stroke="#4a68a8" stroke-width="0.8"/><path d="M2.4 7.2h3.2" stroke="#4a68a8" stroke-width="0.9"/></svg><svg class="si" style="position:absolute;left:608.2px;top:186.9px" width="5" height="5" viewBox="0 0 5 5"><path d="M0.3 1h4.4L2.5 3.6z" fill="#777"/></svg><svg class="si" style="position:absolute;left:616.4px;top:184.7px" width="8.6" height="8.6" viewBox="0 0 8.6 8.6"><rect x="0.6" y="1.8" width="6.6" height="6" fill="#f4f6fa" stroke="#3a58a0" stroke-width="0.8"/><rect x="0.6" y="1.8" width="6.6" height="1.5" fill="#3a58a0"/><circle cx="7" cy="1.8" r="1.5" fill="#f2c21c"/></svg><svg class="si" style="position:absolute;left:627.7px;top:186.9px" width="5" height="5" viewBox="0 0 5 5"><path d="M0.3 1h4.4L2.5 3.6z" fill="#555"/></svg><span class="t" style="left:486.60px;color:#6a6d6e;letter-spacing:-0.334px;top:195px;font-size:8.2px;">Squish ScriptConsole</span><div style="position:absolute;left:485.5px;top:206.4px;width:153.1px;height:64px;background:#fefefe;border-radius:0 0 2px 2px"></div><span class="t" style="left:487.00px;color:#555;font-family:'DejaVu Sans Mono','Liberation Mono',monospace;top:206px;font-size:7.32px;">&gt;&gt;&gt;</span>
<div style="position:absolute;left:2.4px;top:274.8px;width:317.4px;height:137.6px;background:#e9e9e8;border:1px solid #c6c6c4;border-radius:4px 4px 2px 2px"></div><div style="position:absolute;left:3.4px;top:275.8px;width:315.4px;height:14px;background:#e0e0df;border-bottom:1px solid #c6c6c4;border-radius:3px 3px 0 0"></div><div style="position:absolute;left:2.4px;top:274.8px;width:91.4px;height:16px;background:#e9e9e8;border:1px solid #c6c6c4;border-bottom:none;border-radius:4px 4px 0 0"></div><svg class="si" style="position:absolute;left:5.5px;top:278.2px" width="7.4" height="8.8" viewBox="0 0 7.4 8.8"><circle cx="3" cy="1.8" r="1.5" fill="#f4d070" stroke="#c09828" stroke-width="0.5"/><path d="M1 5.4c0-2 4-2 4 0" fill="#f8e4a0" stroke="#c8a848" stroke-width="0.5"/><circle cx="1.8" cy="7" r="1.3" fill="none" stroke="#3a70c8" stroke-width="0.7"/><circle cx="5.6" cy="7" r="1.3" fill="none" stroke="#3a70c8" stroke-width="0.7"/><path d="M3 5.4v0.8" stroke="#3a70c8" stroke-width="0.6"/></svg><span class="t" style="left:16.00px;color:#1e2122;letter-spacing:-0.294px;top:278px;font-size:8.2px;">Application Objects</span><svg class="si" style="position:absolute;left:84.9px;top:279.8px" width="6" height="6" viewBox="0 0 6 6"><path d="M1 1l4 4M5 1l-4 4" stroke="#4a4a4a" stroke-width="0.75" fill="none"/><rect x="1.6" y="1.6" width="2.8" height="2.8" fill="none" stroke="#4a4a4a" stroke-width="0.6"/></svg><svg class="si" style="position:absolute;left:248.5px;top:277.8px" width="8" height="8.4" viewBox="0 0 8 8.4"><path d="M0.6 3h5.6M4.6 1l2 2-2 2" stroke="#e8a820" stroke-width="1" fill="none"/><path d="M7.4 5.6h-5.6M3.4 3.6l-2 2 2 2" stroke="#4a78c8" stroke-width="1" fill="none"/><circle cx="4" cy="4.2" r="1.1" fill="#f0c030"/></svg><svg class="si" style="position:absolute;left:259.1px;top:277.8px" width="6.8" height="8.4" viewBox="0 0 6.8 8.4"><path d="M3.4 0.6l3 3.2h-1.6v4h-2.8v-4h-1.6z" fill="#fbf0cc" stroke="#d8b868" stroke-width="0.6"/></svg><svg class="si" style="position:absolute;left:268.3px;top:277.7px" width="8.4" height="8.6" viewBox="0 0 8.4 8.6"><path d="M0.6 8l0.8-2.2 4.4-4.6 1.6 1.4-4.4 4.6z" fill="#2a3a2a"/><path d="M5.4 1.6l1.2-1.2 1.4 1.4-1.2 1.2z" fill="#38b048"/></svg><svg class="si" style="position:absolute;left:277.8px;top:277.7px" width="8.4" height="8.6" viewBox="0 0 8.4 8.6"><path d="M1 7.6l5.6-6.4" stroke="#f4ead0" stroke-width="1.6"/><path d="M0.6 2h3M5 6.6h2.8" stroke="#d8e0f0" stroke-width="0.9"/></svg><svg class="si" style="position:absolute;left:287.3px;top:277.7px" width="8.4" height="8.6" viewBox="0 0 8.4 8.6"><path d="M0.8 7.8l0.6-2 4.8-5 1.4 1.4-4.8 5z" fill="#f8e8c0" stroke="#ecd498" stroke-width="0.4"/></svg><svg class="si" style="position:absolute;left:298px;top:279.15px" width="6" height="2.9" viewBox="0 0 6 2.9"><rect x="0.5" y="0.5" width="5" height="1.9" rx="0.5" fill="#f6f6f6" stroke="#333" stroke-width="0.75"/></svg><svg class="si" style="position:absolute;left:307.9px;top:278.9px" width="6.2" height="6.2" viewBox="0 0 6.2 6.2"><rect x="0.5" y="0.9" width="5.2" height="4.8" fill="#fafafa" stroke="#222" stroke-width="0.8"/><path d="M0.1 0.9h6" stroke="#222" stroke-width="1.5"/></svg><div style="position:absolute;left:7.4px;top:295.3px;width:308.4px;height:14.8px;background:#fcfcfb;border:1px solid #cdcdcb;border-radius:2.5px"></div><svg class="si" style="position:absolute;left:11px;top:299.2px" width="7.6" height="7.6" viewBox="0 0 7.6 7.6"><circle cx="3" cy="3" r="2.2" fill="none" stroke="#3c3f40" stroke-width="1.1"/><path d="M4.6 4.6l2.4 2.4" stroke="#3c3f40" stroke-width="1.3"/></svg><span class="t" style="left:21.90px;color:#8c8f90;letter-spacing:-0.237px;top:298px;font-size:8.2px;">Filter based on the name</span><svg class="si" style="position:absolute;left:303.4px;top:299.4px" width="8.8" height="6.4" viewBox="0 0 8.8 6.4"><path d="M0.4 3.2l2.6-2.8h5.4v5.6h-5.4z" fill="#3a3d3e"/><path d="M4 1.8l2.6 2.6M6.6 1.8l-2.6 2.6" stroke="#fff" stroke-width="0.8"/></svg><div style="position:absolute;left:6.9px;top:314.3px;width:308.8px;height:94.2px;background:#f1f1f0"></div><div style="position:absolute;left:6.9px;top:314.3px;width:308.8px;height:15.8px;background:#fcfcfb;border-bottom:1px solid #dededc"></div><span class="t" style="left:9.80px;color:#5a5d5e;letter-spacing:-0.312px;top:317px;font-size:8.2px;">Object</span><span class="t" style="left:117.20px;color:#5a5d5e;letter-spacing:-0.438px;top:317px;font-size:8.2px;">Type</span><div style="position:absolute;left:6.9px;top:330.4px;width:308.8px;height:13.8px;background:#e0e0df"></div><div style="position:absolute;left:113px;top:314.3px;width:0.8px;height:16px;background:#e2e2e0"></div><div style="position:absolute;left:113px;top:330.3px;width:0.8px;height:78.2px;background:#f2bea8"></div><div style="position:absolute;left:6.9px;top:330px;width:106px;height:78.5px;overflow:hidden"><div style="position:absolute;left:-6.9px;top:-330px"><svg class="si" style="position:absolute;left:7.9px;top:334.3px" width="6" height="6" viewBox="0 0 6 6"><path d="M1.4 0.4v5.2L4.8 3z" fill="#3a3a3a"/></svg><div style="position:absolute;left:16.4px;top:334px;width:6.6px;height:6.6px;background:#fdfdfd;border:1px solid #cfcfcd;border-radius:1.5px"></div><span class="t" style="left:25.70px;color:#2e3132;letter-spacing:-0.056px;top:332px;font-size:8.2px;">main.qml @ untitled [4.12]</span><svg class="si" style="position:absolute;left:7.9px;top:348.2px" width="6" height="6" viewBox="0 0 6 6"><path d="M1.4 0.4v5.2L4.8 3z" fill="#3a3a3a"/></svg><div style="position:absolute;left:16.4px;top:347.9px;width:6.6px;height:6.6px;background:#fdfdfd;border:1px solid #cfcfcd;border-radius:1.5px"></div><span class="t" style="left:25.70px;color:#5a5d5e;letter-spacing:-0.217px;top:346px;font-size:8.2px;">QtCreator.Menu.File</span><svg class="si" style="position:absolute;left:7.9px;top:362px" width="6" height="6" viewBox="0 0 6 6"><path d="M1.4 0.4v5.2L4.8 3z" fill="#3a3a3a"/></svg><div style="position:absolute;left:16.4px;top:361.7px;width:6.6px;height:6.6px;background:#fdfdfd;border:1px solid #cfcfcd;border-radius:1.5px"></div><span class="t" style="left:25.70px;color:#5a5d5e;letter-spacing:-0.228px;top:360px;font-size:8.2px;">QtCreator.Menu.Edit</span><svg class="si" style="position:absolute;left:7.9px;top:376px" width="6" height="6" viewBox="0 0 6 6"><path d="M1.4 0.4v5.2L4.8 3z" fill="#3a3a3a"/></svg><div style="position:absolute;left:16.4px;top:375.7px;width:6.6px;height:6.6px;background:#fdfdfd;border:1px solid #cfcfcd;border-radius:1.5px"></div><span class="t" style="left:25.70px;color:#5a5d5e;letter-spacing:-0.192px;top:374px;font-size:8.2px;">QtCreator.Menu.Tools</span><svg class="si" style="position:absolute;left:7.9px;top:389.8px" width="6" height="6" viewBox="0 0 6 6"><path d="M1.4 0.4v5.2L4.8 3z" fill="#3a3a3a"/></svg><div style="position:absolute;left:16.4px;top:389.5px;width:6.6px;height:6.6px;background:#fdfdfd;border:1px solid #cfcfcd;border-radius:1.5px"></div><span class="t" style="left:25.70px;color:#5a5d5e;letter-spacing:-0.207px;top:388px;font-size:8.2px;">QtCreator.Menu.Window</span><svg class="si" style="position:absolute;left:7.9px;top:403.6px" width="6" height="6" viewBox="0 0 6 6"><path d="M1.4 0.4v5.2L4.8 3z" fill="#3a3a3a"/></svg><div style="position:absolute;left:16.4px;top:403.3px;width:6.6px;height:6.6px;background:#fdfdfd;border:1px solid #cfcfcd;border-radius:1.5px"></div><span class="t" style="left:25.70px;color:#5a5d5e;letter-spacing:-0.162px;top:402px;font-size:8.2px;">QtCreator.Menu.Help</span></div></div><div style="position:absolute;left:114px;top:330px;width:201px;height:78.5px;overflow:hidden"><div style="position:absolute;left:-114px;top:-330px"><span class="t" style="left:115.60px;color:#2e3132;letter-spacing:-0.244px;top:332px;font-size:8.2px;">Core::Internal::MainWindow</span><span class="t" style="left:115.60px;color:#5a5d5e;letter-spacing:-0.492px;top:346px;font-size:8.2px;">QMenu</span><span class="t" style="left:115.60px;color:#5a5d5e;letter-spacing:-0.492px;top:360px;font-size:8.2px;">QMenu</span><span class="t" style="left:115.60px;color:#5a5d5e;letter-spacing:-0.492px;top:374px;font-size:8.2px;">QMenu</span><span class="t" style="left:115.60px;color:#5a5d5e;letter-spacing:-0.492px;top:388px;font-size:8.2px;">QMenu</span><span class="t" style="left:115.60px;color:#5a5d5e;letter-spacing:-0.492px;top:402px;font-size:8.2px;">QMenu</span></div></div>
<div style="position:absolute;left:322.5px;top:274.8px;width:317.5px;height:137.6px;background:#e9e9e8;border:1px solid #c6c6c4;border-radius:4px 0 0 2px"></div><div style="position:absolute;left:323.5px;top:275.8px;width:315.5px;height:14px;background:#e0e0df;border-bottom:1px solid #c6c6c4;border-radius:3px 0 0 0"></div><div style="position:absolute;left:322.5px;top:274.8px;width:58.5px;height:16px;background:#e9e9e8;border:1px solid #c6c6c4;border-bottom:none;border-radius:4px 4px 0 0"></div><svg class="si" style="position:absolute;left:325.7px;top:278.5px" width="8.6" height="8.2" viewBox="0 0 8.6 8.2"><rect x="0.6" y="0.8" width="7.4" height="6.6" fill="#f8f8fc" stroke="#5a70a0" stroke-width="0.8"/><path d="M0.6 2.6h7.4M3 2.6v4.8" stroke="#5a70a0" stroke-width="0.7"/><rect x="4.8" y="4" width="3" height="3.2" fill="#e8c868"/></svg><span class="t" style="left:335.60px;color:#1e2122;letter-spacing:-0.282px;top:277px;font-size:8.2px;">Propertie</span><svg class="si" style="position:absolute;left:371px;top:279.8px" width="6" height="6" viewBox="0 0 6 6"><path d="M1 1l4 4M5 1l-4 4" stroke="#4a4a4a" stroke-width="0.75" fill="none"/><rect x="1.6" y="1.6" width="2.8" height="2.8" fill="none" stroke="#4a4a4a" stroke-width="0.6"/></svg><svg class="si" style="position:absolute;left:384.6px;top:278.6px" width="7.6" height="8.4" viewBox="0 0 7.6 8.4"><rect x="0.6" y="1" width="6.4" height="6.6" fill="#f4f6fa" stroke="#a8b0c4" stroke-width="0.6"/><circle cx="4.6" cy="5.4" r="2.2" fill="#4a88e0" stroke="#2a58b0" stroke-width="0.5"/><circle cx="4.6" cy="5.4" r="0.8" fill="#e8f0ff"/></svg><span class="t" style="left:394.40px;color:#5a5d5e;letter-spacing:-0.287px;top:277px;font-size:8.2px;">Methods</span><svg class="si" style="position:absolute;left:430px;top:278.2px" width="7.2" height="8.8" viewBox="0 0 7.2 8.8"><rect x="0.6" y="0.6" width="6" height="7.6" fill="#f8f8f4" stroke="#a8a8a0" stroke-width="0.6"/><path d="M1.6 2.2h1M1.6 4.2h1M1.6 6.2h1" stroke="#48a858" stroke-width="0.9"/><path d="M3.4 2.2h2.4M3.4 4.2h2.4M3.4 6.2h2.4" stroke="#88a0d0" stroke-width="0.7"/></svg><span class="t" style="left:440.30px;color:#5a5d5e;letter-spacing:-0.345px;top:277px;font-size:8.2px;">Test Res</span><svg class="si" style="position:absolute;left:476.9px;top:278.3px" width="8.2" height="8.6" viewBox="0 0 8.2 8.6"><rect x="0.6" y="0.8" width="5.6" height="6.6" fill="#f4f6fa" stroke="#98a0b4" stroke-width="0.6"/><path d="M3.4 3l3.6 2.2-3.6 2.2z" fill="#38a848" stroke="#287838" stroke-width="0.4"/><circle cx="6.6" cy="7" r="1.2" fill="#3a68c0"/></svg><span class="t" style="left:487.80px;color:#5a5d5e;letter-spacing:-0.424px;top:277px;font-size:8.2px;">Runner/S</span><svg class="si" style="position:absolute;left:522.6px;top:278.7px" width="8" height="8.6" viewBox="0 0 8 8.6"><path d="M0.6 7l5-6 1.4 1.2-5 6z" fill="#e8c050"/></svg><div style="position:absolute;left:323.5px;top:290.4px;width:316px;height:16px;background:#e5e5e4;border-bottom:1px solid #d2d2d0"></div><span class="t" style="left:323.80px;color:#66696a;letter-spacing:-0.110px;top:292px;font-size:8.2px;">Properties for 'main\\.qml @ untitled [4\\.12] - Qt Creator'</span><div style="position:absolute;left:327.8px;top:307.5px;width:306px;height:14.8px;background:#fcfcfb;border:1px solid #cdcdcb;border-radius:2.5px"></div><svg class="si" style="position:absolute;left:331.6px;top:311.4px" width="7.6" height="7.6" viewBox="0 0 7.6 7.6"><circle cx="3" cy="3" r="2.2" fill="none" stroke="#3c3f40" stroke-width="1.1"/><path d="M4.6 4.6l2.4 2.4" stroke="#3c3f40" stroke-width="1.3"/></svg><span class="t" style="left:342.50px;color:#8c8f90;letter-spacing:-0.245px;top:310px;font-size:8.2px;">Filter based on the name</span><div style="position:absolute;left:327px;top:326.2px;width:308px;height:82.3px;background:#f1f1f0"></div><div style="position:absolute;left:327px;top:326.2px;width:308px;height:16.2px;background:#fcfcfb;border-bottom:1px solid #dededc"></div><span class="t" style="left:329.40px;color:#5a5d5e;letter-spacing:-0.169px;top:329px;font-size:8.2px;">Property</span><span class="t" style="left:437.20px;color:#5a5d5e;letter-spacing:-0.309px;top:329px;font-size:8.2px;">Value</span><div style="position:absolute;left:433.2px;top:326.2px;width:0.8px;height:16.2px;background:#e2e2e0"></div><div style="position:absolute;left:433.2px;top:342.4px;width:0.8px;height:66.1px;background:#f2bea8"></div><div style="position:absolute;left:327px;top:342px;width:308px;height:66.5px;overflow:hidden"><div style="position:absolute;left:-327px;top:-342px"><div style="position:absolute;left:337.2px;top:346.4px;width:6.6px;height:6.6px;background:#fdfdfd;border:1px solid #cfcfcd;border-radius:1.5px"></div><span class="t" style="left:345.60px;color:#5a5d5e;letter-spacing:-0.228px;top:345px;font-size:8.2px;">accessibleDescription</span><div style="position:absolute;left:337.2px;top:360.2px;width:6.6px;height:6.6px;background:#fdfdfd;border:1px solid #cfcfcd;border-radius:1.5px"></div><span class="t" style="left:345.60px;color:#5a5d5e;letter-spacing:-0.313px;top:358px;font-size:8.2px;">accessibleName</span><div style="position:absolute;left:337.2px;top:374.1px;width:6.6px;height:6.6px;background:#fdfdfd;border:1px solid #cfcfcd;border-radius:1.5px"></div><span class="t" style="left:345.60px;color:#5a5d5e;letter-spacing:-0.261px;top:372px;font-size:8.2px;">animated</span><div style="position:absolute;left:337.2px;top:388px;width:6.6px;height:6.6px;background:#fdfdfd;border:1px solid #cfcfcd;border-radius:1.5px"></div><span class="t" style="left:345.60px;color:#5a5d5e;letter-spacing:-0.244px;top:386px;font-size:8.2px;">autoFillBackground</span><div style="position:absolute;left:337.2px;top:402px;width:6.6px;height:6.6px;background:#fdfdfd;border:1px solid #cfcfcd;border-radius:1.5px"></div><span class="t" style="left:345.60px;color:#5a5d5e;letter-spacing:-0.232px;top:400px;font-size:8.2px;">contentsMargins</span><svg class="si" style="position:absolute;left:328.2px;top:402.3px" width="6" height="6" viewBox="0 0 6 6"><path d="M1.4 0.4v5.2L4.8 3z" fill="#3a3a3a"/></svg><span class="t" style="left:435.60px;color:#5a5d5e;letter-spacing:-0.177px;top:372px;font-size:8.2px;">true</span><span class="t" style="left:435.60px;color:#5a5d5e;letter-spacing:-0.199px;top:386px;font-size:8.2px;">false</span><span class="t" style="left:435.60px;color:#5a5d5e;letter-spacing:0.021px;top:400px;font-size:8.2px;">{ bottom = 0, left = 0, right = 0, top = 0 }</span></div></div>
<div style="position:absolute;left:2px;top:412.6px;width:638px;height:14.4px;background:#e9e9e8;border-top:1px solid #dcdcda"></div><span class="t" style="left:288.00px;color:#5a5d5e;letter-spacing:-0.199px;top:414px;font-size:8.2px;">Writable</span><span class="t" style="left:352.20px;color:#5a5d5e;letter-spacing:-0.081px;top:414px;font-size:8.2px;">Insert</span><span class="t" style="left:413.00px;color:#5a5d5e;letter-spacing:-0.207px;top:414px;font-size:8.2px;">103 : 1</span><div style="position:absolute;left:284px;top:414px;width:0.8px;height:12px;background:#f6f6f5"></div><div style="position:absolute;left:347.2px;top:414px;width:0.8px;height:12px;background:#f6f6f5"></div><div style="position:absolute;left:408.8px;top:414px;width:0.8px;height:12px;background:#f6f6f5"></div><div style="position:absolute;left:467.8px;top:415px;width:1px;height:10px;background:repeating-linear-gradient(#b4b4b2 0 1px,transparent 1px 2px)"></div><div style="position:absolute;left:528.5px;top:217px;width:483.5px;height:340.4px;background:#fff;border-radius:4px 4px 0 0;box-shadow:0 1px 6px rgba(0,0,0,0.28)"></div><div style="position:absolute;left:528.5px;top:217px;width:483.5px;height:16px;background:linear-gradient(#56534b,#45433e 45%,#3b3a36);border-radius:4px 4px 0 0"></div><span class="t" style="left:698.70px;color:#d9d5cb;letter-spacing:-0.220px;top:219px;font-size:8.3px;font-weight:bold;">main.qml @ untitled [4.12] - Qt Creator</span><svg class="qi" style="position:absolute;left:999.8px;top:219.9px" width="10" height="10" viewBox="0 0 10 10"><circle cx="5" cy="5" r="4.3" fill="#e8602c" stroke="#b84818" stroke-width="0.6"/><path d="M3.3 3.3l3.4 3.4M6.7 3.3l-3.4 3.4" stroke="#5a2410" stroke-width="1.2"/></svg><div style="position:absolute;left:528.5px;top:233px;width:483.5px;height:11.2px;background:linear-gradient(#ededed,#cdcdcd)"></div><span class="t" style="left:534.20px;color:#3a3a3a;font-family:'DejaVu Sans','Liberation Sans',sans-serif;top:234px;font-size:6.38px;"><u>F</u>ile</span><span class="t" style="left:553.10px;color:#3a3a3a;font-family:'DejaVu Sans','Liberation Sans',sans-serif;top:234px;font-size:6.38px;"><u>E</u>dit</span><span class="t" style="left:573.20px;color:#3a3a3a;font-family:'DejaVu Sans','Liberation Sans',sans-serif;top:234px;font-size:6.38px;"><u>B</u>uild</span><span class="t" style="left:597.50px;color:#3a3a3a;font-family:'DejaVu Sans','Liberation Sans',sans-serif;top:234px;font-size:6.38px;"><u>D</u>ebug</span><span class="t" style="left:626.40px;color:#3a3a3a;font-family:'DejaVu Sans','Liberation Sans',sans-serif;top:234px;font-size:6.38px;"><u>A</u>nalyze</span><span class="t" style="left:659.00px;color:#3a3a3a;font-family:'DejaVu Sans','Liberation Sans',sans-serif;top:234px;font-size:6.38px;"><u>T</u>ools</span><span class="t" style="left:683.10px;color:#3a3a3a;font-family:'DejaVu Sans','Liberation Sans',sans-serif;top:234px;font-size:6.38px;"><u>W</u>indow</span><span class="t" style="left:716.60px;color:#3a3a3a;font-family:'DejaVu Sans','Liberation Sans',sans-serif;top:234px;font-size:6.38px;"><u>H</u>elp</span><div style="position:absolute;left:528.5px;top:244.2px;width:483.5px;height:13.3px;background:#404244"></div><div style="position:absolute;left:528.5px;top:244.2px;width:37.8px;height:313.2px;background:#404244"></div><div style="position:absolute;left:528.5px;top:257px;width:37.8px;height:0.7px;background:#2c2e30"></div><svg class="qi" style="position:absolute;left:541.85px;top:264px" width="10.5" height="10.2" viewBox="0 0 10.5 10.2"><rect x="0" y="0" width="2.7" height="2.6" fill="#d2d2d2"/><rect x="0" y="3.8" width="2.7" height="2.6" fill="#d2d2d2"/><rect x="0" y="7.6" width="2.7" height="2.6" fill="#d2d2d2"/><rect x="3.9" y="0" width="2.7" height="2.6" fill="#d2d2d2"/><rect x="3.9" y="3.8" width="2.7" height="2.6" fill="#d2d2d2"/><rect x="3.9" y="7.6" width="2.7" height="2.6" fill="#d2d2d2"/><rect x="7.8" y="0" width="2.7" height="2.6" fill="#d2d2d2"/><rect x="7.8" y="3.8" width="2.7" height="2.6" fill="#d2d2d2"/><rect x="7.8" y="7.6" width="2.7" height="2.6" fill="#d2d2d2"/></svg><span class="t" style="left:528.5px;width:37.799999999999955px;text-align:center;top:275px;font-family:'DejaVu Sans','Liberation Sans',sans-serif;font-size:5.32px;font-weight:bold;color:#c8c8c8">Welcome</span><svg class="qi" style="position:absolute;left:541.7px;top:292.3px" width="10.8" height="10.8" viewBox="0 0 10.8 10.8"><rect x="0" y="0" width="10.8" height="10.8" fill="#cbcbcb"/><rect x="2.7" y="2.9" width="6" height="5.2" fill="#3a3c3e"/><path d="M6 4.4h2.7M6 5.5h2M6 6.6h2.7" stroke="#9a9a9a" stroke-width="0.6"/></svg><span class="t" style="left:528.5px;width:37.799999999999955px;text-align:center;top:303px;font-family:'DejaVu Sans','Liberation Sans',sans-serif;font-size:5.32px;font-weight:bold;color:#c8c8c8">Edit</span><svg class="qi" style="position:absolute;left:541.3px;top:320.5px" width="11.4" height="11.6" viewBox="0 0 11.4 11.6"><path d="M0.6 11l0.8-3 7-7 2.2 2.2-7 7z" fill="#d4d4d4"/><path d="M7.4 2l2.2 2.2" stroke="#404244" stroke-width="0.7"/></svg><span class="t" style="left:528.5px;width:37.799999999999955px;text-align:center;top:332px;font-family:'DejaVu Sans','Liberation Sans',sans-serif;font-size:5.32px;font-weight:bold;color:#c8c8c8">Design</span><div style="position:absolute;left:528.5px;top:342.3px;width:37.8px;height:28.8px;background:#262829"></div><svg class="qi" style="position:absolute;left:542px;top:349.7px" width="10" height="10.6" viewBox="0 0 10 10.6"><ellipse cx="5" cy="6" rx="3.4" ry="4.2" fill="#8e9af2"/><circle cx="5" cy="2" r="1.7" fill="#aab4f8"/><path d="M5 2.6v7.4" stroke="#404bb0" stroke-width="0.6"/><path d="M1.6 4.4l-1.4-1.2M8.4 4.4l1.4-1.2M1.4 6.4h-1.4M8.6 6.4h1.4M1.8 8.6l-1.4 1.2M8.2 8.6l1.4 1.2" stroke="#9aa6f4" stroke-width="0.7"/></svg><span class="t" style="left:528.5px;width:37.799999999999955px;text-align:center;top:360px;font-family:'DejaVu Sans','Liberation Sans',sans-serif;font-size:5.32px;font-weight:bold;color:#f4f4f4">Debug</span><svg class="qi" style="position:absolute;left:541px;top:377px" width="12" height="12" viewBox="0 0 12 12"><path d="M1 10.4l5-5.2a2.8 2.8 0 0 1 3.6-3.6l-1.8 1.8 0.4 1.4 1.4 0.4 1.8-1.8a2.8 2.8 0 0 1-3.6 3.6l-5 5.2z" fill="#d4d4d4"/></svg><span class="t" style="left:528.5px;width:37.799999999999955px;text-align:center;top:389px;font-family:'DejaVu Sans','Liberation Sans',sans-serif;font-size:5.32px;font-weight:bold;color:#c8c8c8">Projects</span><svg class="qi" style="position:absolute;left:541.6px;top:406px" width="10.8" height="10.8" viewBox="0 0 10.8 10.8"><circle cx="5.4" cy="5.4" r="5" fill="#d4d4d4"/><path d="M3.8 4.2c0-2.2 3.4-2.2 3.4 0c0 1.2-1.6 1.4-1.6 2.6" stroke="#404244" stroke-width="1.2" fill="none"/><circle cx="5.5" cy="8.4" r="0.8" fill="#404244"/></svg><span class="t" style="left:528.5px;width:37.799999999999955px;text-align:center;top:417px;font-family:'DejaVu Sans','Liberation Sans',sans-serif;font-size:5.32px;font-weight:bold;color:#c8c8c8">Help</span><div style="position:absolute;left:528.5px;top:442.4px;width:37.8px;height:0.8px;background:#2c2e30"></div><span class="t" style="left:528.5px;width:37.799999999999955px;text-align:center;top:443px;font-family:'DejaVu Sans','Liberation Sans',sans-serif;font-size:5.32px;font-weight:normal;color:#d8d8d8">untitled</span><svg class="qi" style="position:absolute;left:540.5px;top:457.6px" width="12.2" height="11.6" viewBox="0 0 12.2 11.6"><rect x="0.6" y="0.6" width="11" height="8" rx="0.8" fill="none" stroke="#d4d4d4" stroke-width="1.2"/><path d="M4.2 10.8h3.8M6.1 8.6v2" stroke="#d4d4d4" stroke-width="1.3"/></svg><svg class="qi" style="position:absolute;left:557.4px;top:464.5px" width="4.4" height="5" viewBox="0 0 4.4 5"><path d="M0.8 0.3v4.4L3.6 2.5z" fill="#bbb"/></svg><span class="t" style="left:528.5px;width:37.799999999999955px;text-align:center;top:472px;font-family:'DejaVu Sans','Liberation Sans',sans-serif;font-size:5.32px;font-weight:bold;color:#c8c8c8">Debug</span><svg class="qi" style="position:absolute;left:542px;top:495.9px" width="10.4" height="11.4" viewBox="0 0 10.4 11.4"><path d="M0.8 0.6v10.2l8.8-5.1z" fill="#7cba5c"/></svg><svg class="qi" style="position:absolute;left:542px;top:516.2px" width="10.4" height="12" viewBox="0 0 10.4 12"><path d="M0.8 0.6v10.2l8.8-5.1z" fill="#7cba5c"/><rect x="5" y="7.4" width="4.6" height="4" fill="#c8c8c8" stroke="#404244" stroke-width="0.5"/><path d="M5.6 7.2l-0.8-0.8M9 7.2l0.8-0.8" stroke="#c8c8c8" stroke-width="0.6"/></svg><svg class="qi" style="position:absolute;left:541.6px;top:536px" width="11.6" height="11.6" viewBox="0 0 11.6 11.6"><path d="M1 10.6l6-6" stroke="#d86a18" stroke-width="1.7"/><path d="M4.4 2.6l2.2-2 4.2 4.2-1.6 1.6-1.2-1.2-1.2 0.6z" fill="#b8b8b8"/></svg><span class="t" style="left:569.20px;color:#e4e4e4;font-family:'DejaVu Sans','Liberation Sans',sans-serif;top:246px;font-size:6.34px;">Projects</span><svg class="qi" style="position:absolute;left:603.2px;top:248px" width="4.4" height="6.4" viewBox="0 0 4.4 6.4"><path d="M0.4 2.6l1.8-2.2 1.8 2.2zM0.4 3.8l1.8 2.2 1.8-2.2z" fill="#d8d8d8"/></svg><div style="position:absolute;left:609.8px;top:246.4px;width:0.8px;height:9.2px;background:#5a5c5e"></div><svg class="qi" style="position:absolute;left:612.3px;top:247.9px" width="7.6" height="7" viewBox="0 0 7.6 7"><path d="M0.4 0.6h6l-2.2 2.8v3.2l-1.6-0.8v-2.4z" fill="#d8d8d8"/><circle cx="6.8" cy="6.2" r="0.6" fill="#d8d8d8"/></svg><div style="position:absolute;left:623.1px;top:244.6px;width:12.5px;height:12.6px;background:#2a2c2e"></div><svg class="qi" style="position:absolute;left:625.4px;top:248.8px" width="8" height="4.8" viewBox="0 0 8 4.8"><ellipse cx="2.2" cy="2.4" rx="1.7" ry="1.4" fill="none" stroke="#d0d0d0" stroke-width="0.8"/><ellipse cx="5.8" cy="2.4" rx="1.7" ry="1.4" fill="none" stroke="#d0d0d0" stroke-width="0.8"/></svg><svg class="qi" style="position:absolute;left:639.1px;top:247.5px" width="9" height="7.4" viewBox="0 0 9 7.4"><rect x="0.5" y="0.5" width="5" height="6.4" fill="none" stroke="#bcbcbc" stroke-width="0.7"/><path d="M0.5 3.7h5" stroke="#bcbcbc" stroke-width="0.7"/><path d="M6.4 3.7h2.2M7.5 2.6v2.2" stroke="#bcbcbc" stroke-width="0.6"/></svg><svg class="qi" style="position:absolute;left:651.7px;top:248px" width="7.4" height="6.4" viewBox="0 0 7.4 6.4"><rect x="0.5" y="0.5" width="6.4" height="5.4" fill="none" stroke="#bcbcbc" stroke-width="0.7"/><rect x="2.2" y="2.2" width="3" height="2" fill="none" stroke="#bcbcbc" stroke-width="0.6"/></svg><div style="position:absolute;left:566.3px;top:257.5px;width:96px;height:186.8px;background:#fff"></div><div style="position:absolute;left:566.3px;top:315.3px;width:96px;height:9.6px;background:#308cc6"></div><svg class="qi" style="position:absolute;left:568.9px;top:260.6px" width="5" height="4.4" viewBox="0 0 5 4.4"><path d="M0.3 0.8h4.4L2.5 3.6z" fill="#555"/></svg><svg class="qi" style="position:absolute;left:577.6px;top:258.3px" width="8.8" height="8.6" viewBox="0 0 8.8 8.6"><path d="M0.6 1.2h3l0.8 1h3.8v5.8h-7.6z" fill="#c8b48c" stroke="#8a7850" stroke-width="0.5"/><path d="M0.6 3.2h7.6v4.8h-7.6z" fill="#dccaa4"/><rect x="4" y="4.6" width="4.4" height="3.2" rx="0.6" fill="#40b040"/></svg><span class="t" style="left:589.70px;color:#1a1a1a;font-family:'DejaVu Sans','Liberation Sans',sans-serif;top:257px;font-size:6.39px;font-weight:bold;">untitled [4.12]</span><svg class="qi" style="position:absolute;left:588px;top:267.9px" width="7.6" height="9" viewBox="0 0 7.6 9"><path d="M0.8 0.5h4l2 2v6h-6z" fill="#f4f4f4" stroke="#b0b0b0" stroke-width="0.5"/><circle cx="5" cy="6.6" r="2" fill="#40b040"/></svg><span class="t" style="left:599.10px;color:#2a2a2a;font-family:'DejaVu Sans','Liberation Sans',sans-serif;top:267px;font-size:6.39px;">untitled.pro</span><svg class="qi" style="position:absolute;left:578.8px;top:279.7px" width="4.4" height="5" viewBox="0 0 4.4 5"><path d="M0.8 0.3v4.4L3.6 2.5z" fill="#555"/></svg><svg class="qi" style="position:absolute;left:587.2px;top:277.7px" width="8.8" height="8.6" viewBox="0 0 8.8 8.6"><path d="M0.6 1.2h3l0.8 1h3.8v5.8h-7.6z" fill="#c8b48c" stroke="#8a7850" stroke-width="0.5"/><path d="M0.6 3.2h7.6v4.8h-7.6z" fill="#dccaa4"/><rect x="3.6" y="4" width="4.2" height="3.2" fill="#e8eef8" stroke="#5a80c0" stroke-width="0.5"/></svg><span class="t" style="left:599.10px;color:#2a2a2a;font-family:'DejaVu Sans','Liberation Sans',sans-serif;top:276px;font-size:6.32px;">Sources</span><svg class="qi" style="position:absolute;left:578.5px;top:289.4px" width="5" height="4.4" viewBox="0 0 5 4.4"><path d="M0.3 0.8h4.4L2.5 3.6z" fill="#555"/></svg><svg class="qi" style="position:absolute;left:587.2px;top:287.1px" width="8.8" height="8.6" viewBox="0 0 8.8 8.6"><path d="M0.6 1.2h3l0.8 1h3.8v5.8h-7.6z" fill="#c8b48c" stroke="#8a7850" stroke-width="0.5"/><path d="M0.6 3.2h7.6v4.8h-7.6z" fill="#dccaa4"/><rect x="4.2" y="4.6" width="3.2" height="3" fill="#6a4a10"/><path d="M4.8 4.6v-1a1 1 0 0 1 2 0v1" stroke="#6a4a10" stroke-width="0.6" fill="none"/></svg><span class="t" style="left:599.10px;color:#2a2a2a;font-family:'DejaVu Sans','Liberation Sans',sans-serif;top:286px;font-size:6.42px;">Resources</span><svg class="qi" style="position:absolute;left:588.2px;top:299px" width="5" height="4.4" viewBox="0 0 5 4.4"><path d="M0.3 0.8h4.4L2.5 3.6z" fill="#555"/></svg><svg class="qi" style="position:absolute;left:597.4px;top:296.3px" width="7.6" height="9" viewBox="0 0 7.6 9"><path d="M0.8 0.5h4l2 2v6h-6z" fill="#f4f4f4" stroke="#b0b0b0" stroke-width="0.5"/><rect x="3" y="5" width="3.2" height="3" fill="#8a5a10"/><path d="M3.6 5v-1a1 1 0 0 1 2 0v1" stroke="#8a5a10" stroke-width="0.6" fill="none"/></svg><span class="t" style="left:608.90px;color:#2a2a2a;font-family:'DejaVu Sans','Liberation Sans',sans-serif;top:295px;font-size:6.3px;">qml.qrc</span><svg class="qi" style="position:absolute;left:598px;top:308.6px" width="5" height="4.4" viewBox="0 0 5 4.4"><path d="M0.3 0.8h4.4L2.5 3.6z" fill="#555"/></svg><svg class="qi" style="position:absolute;left:606.6px;top:305.9px" width="8.8" height="8.6" viewBox="0 0 8.8 8.6"><path d="M0.6 1.2h3l0.8 1h3.8v5.8h-7.6z" fill="#c8b48c" stroke="#8a7850" stroke-width="0.5"/><path d="M0.6 3.2h7.6v4.8h-7.6z" fill="#dccaa4"/></svg><span class="t" style="left:618.60px;color:#2a2a2a;font-family:'DejaVu Sans','Liberation Sans',sans-serif;top:305px;font-size:7.11px;">/</span><svg class="qi" style="position:absolute;left:616.4px;top:315.5px" width="7.6" height="9" viewBox="0 0 7.6 9"><path d="M0.8 0.5h4l2 2v6h-6z" fill="#f4f4f4" stroke="#b0b0b0" stroke-width="0.5"/><path d="M1.6 5.4h4.4v2.6h-4.4z" fill="#58b8d8"/></svg><span class="t" style="left:628.40px;color:#fff;font-family:'DejaVu Sans','Liberation Sans',sans-serif;top:314px;font-size:6.25px;">main.qml</span><div style="position:absolute;left:566.3px;top:444.2px;width:96px;height:12.3px;background:#404244"></div><span class="t" style="left:569.00px;color:#e4e4e4;font-family:'DejaVu Sans','Liberation Sans',sans-serif;top:446px;font-size:6.4px;">Open Documents</span><svg class="qi" style="position:absolute;left:629px;top:448px" width="4.4" height="6.4" viewBox="0 0 4.4 6.4"><path d="M0.4 2.6l1.8-2.2 1.8 2.2zM0.4 3.8l1.8 2.2 1.8-2.2z" fill="#d8d8d8"/></svg><svg class="qi" style="position:absolute;left:638.7px;top:447.5px" width="9" height="7.4" viewBox="0 0 9 7.4"><rect x="0.5" y="0.5" width="5" height="6.4" fill="none" stroke="#bcbcbc" stroke-width="0.7"/><path d="M0.5 3.7h5" stroke="#bcbcbc" stroke-width="0.7"/><path d="M6.4 3.7h2.2M7.5 2.6v2.2" stroke="#bcbcbc" stroke-width="0.6"/></svg><svg class="qi" style="position:absolute;left:651.7px;top:448px" width="7.4" height="6.4" viewBox="0 0 7.4 6.4"><rect x="0.5" y="0.5" width="6.4" height="5.4" fill="none" stroke="#bcbcbc" stroke-width="0.7"/><rect x="2.2" y="2.2" width="3" height="2" fill="none" stroke="#bcbcbc" stroke-width="0.6"/></svg><div style="position:absolute;left:566.3px;top:456.4px;width:96px;height:87.4px;background:#fff"></div><div style="position:absolute;left:566.3px;top:457.4px;width:88.4px;height:8px;background:#308cc6"></div><span class="t" style="left:568.30px;color:#fff;font-family:'DejaVu Sans','Liberation Sans',sans-serif;top:456px;font-size:6.4px;">main.qml</span><div style="position:absolute;left:654.7px;top:456.4px;width:7.6px;height:87.4px;background:#f0f0f0;border-left:0.6px solid #dcdcdc"></div><svg class="qi" style="position:absolute;left:656px;top:458.6px" width="5" height="4" viewBox="0 0 5 4"><path d="M0.4 3.2L2.5 0.6l2.1 2.6z" fill="#444"/></svg><svg class="qi" style="position:absolute;left:656px;top:537.8px" width="5" height="4" viewBox="0 0 5 4"><path d="M0.4 0.6L2.5 3.2l2.1-2.6z" fill="#444"/></svg><div style="position:absolute;left:661.9px;top:257.5px;width:0.8px;height:286.3px;background:#b8b8b8"></div><svg class="qi" style="position:absolute;left:666.3px;top:247.6px" width="5" height="7.2" viewBox="0 0 5 7.2"><path d="M4 0.6L1 3.6l3 3" stroke="#e0b020" stroke-width="1.1" fill="none"/></svg><svg class="qi" style="position:absolute;left:679px;top:247.6px" width="5" height="7.2" viewBox="0 0 5 7.2"><path d="M1 0.6l3 3-3 3" stroke="#606264" stroke-width="1" fill="none"/></svg><svg class="qi" style="position:absolute;left:691.2px;top:247.9px" width="7.2" height="7" viewBox="0 0 7.2 7"><rect x="0.6" y="3" width="4.6" height="3.6" fill="#5c5e60"/><path d="M3.6 3v-1.2a1.4 1.4 0 0 1 2.8 0v0.6" stroke="#5c5e60" stroke-width="0.8" fill="none"/></svg><svg class="qi" style="position:absolute;left:704.1px;top:246.5px" width="7.6" height="9" viewBox="0 0 7.6 9"><path d="M0.8 0.5h4l2 2v6h-6z" fill="#f4f4f4" stroke="#b0b0b0" stroke-width="0.5"/><path d="M1.4 5h4.8v2.6h-4.8z" fill="#58b8d8"/></svg><span class="t" style="left:716.60px;color:#e4e4e4;font-family:'DejaVu Sans','Liberation Sans',sans-serif;top:246px;font-size:6.36px;">main.qml</span><svg class="qi" style="position:absolute;left:826.8px;top:248px" width="4.4" height="6.4" viewBox="0 0 4.4 6.4"><path d="M0.4 2.6l1.8-2.2 1.8 2.2zM0.4 3.8l1.8 2.2 1.8-2.2z" fill="#d8d8d8"/></svg><div style="position:absolute;left:833px;top:246.4px;width:0.8px;height:9.2px;background:#5a5c5e"></div><svg class="qi" style="position:absolute;left:836.9px;top:248.1px" width="6.2" height="6.2" viewBox="0 0 6.2 6.2"><path d="M0.6 0.6l5 5M5.6 0.6l-5 5" stroke="#c8c8c8" stroke-width="0.8"/></svg><div style="position:absolute;left:846.1px;top:246.4px;width:0.8px;height:9.2px;background:#5a5c5e"></div><svg class="qi" style="position:absolute;left:851px;top:247.8px" width="7.2" height="6.8" viewBox="0 0 7.2 6.8"><path d="M3 0.6h3.6l-3 5.6h-3.6z" fill="#38b0d8" transform="rotate(20 3.6 3.4)"/></svg><span class="t" style="left:861.00px;color:#e4e4e4;font-family:'DejaVu Sans','Liberation Sans',sans-serif;top:246px;font-size:6.42px;">onTriggered</span><svg class="qi" style="position:absolute;left:933px;top:248px" width="4.4" height="6.4" viewBox="0 0 4.4 6.4"><path d="M0.4 2.6l1.8-2.2 1.8 2.2zM0.4 3.8l1.8 2.2 1.8-2.2z" fill="#d8d8d8"/></svg><div style="position:absolute;left:939.6px;top:246.4px;width:0.8px;height:9.2px;background:#5a5c5e"></div><svg class="qi" style="position:absolute;left:942.6px;top:248.2px" width="3.6" height="6" viewBox="0 0 3.6 6"><path d="M0.6 0.6l2.4 2.4-2.4 2.4z" fill="#5c5e60"/></svg><span class="t" style="left:948.70px;color:#e4e4e4;font-family:'DejaVu Sans','Liberation Sans',sans-serif;top:246px;font-size:6.41px;">Line: 21, Col: 1</span><svg class="qi" style="position:absolute;left:1001.4px;top:247.5px" width="9" height="7.4" viewBox="0 0 9 7.4"><rect x="0.5" y="0.5" width="5" height="6.4" fill="none" stroke="#bcbcbc" stroke-width="0.7"/><path d="M0.5 3.7h5" stroke="#bcbcbc" stroke-width="0.7"/><path d="M6.4 3.7h2.2M7.5 2.6v2.2" stroke="#bcbcbc" stroke-width="0.6"/></svg><div style="position:absolute;left:662.7px;top:257.5px;width:342px;height:122.4px;background:#fff"></div><div style="position:absolute;left:662.7px;top:257.5px;width:47px;height:122.4px;background:#f3f3f3"></div><div style="position:absolute;left:700px;top:328px;width:0.9px;height:52px;background:#2a9a2a"></div><div style="position:absolute;left:1004.4px;top:257.5px;width:7.6px;height:122.4px;background:#f4f4f4;border-left:0.6px solid #dedede"></div><div style="position:absolute;left:1005px;top:318.5px;width:7px;height:54px;background:#e2e2e2"></div><svg class="qi" style="position:absolute;left:1005.7px;top:259.4px" width="5" height="4" viewBox="0 0 5 4"><path d="M0.4 3.2L2.5 0.6l2.1 2.6z" fill="#444"/></svg><svg class="qi" style="position:absolute;left:1005.7px;top:373.8px" width="5" height="4" viewBox="0 0 5 4"><path d="M0.4 0.6L2.5 3.2l2.1-2.6z" fill="#444"/></svg><span class="qn" style="top:259px">1</span><span class="qn" style="top:268px">2</span><span class="qn" style="top:276px">3</span><span class="qn" style="top:285px">4</span><span class="qn" style="top:293px">5</span><span class="qn" style="top:302px">6</span><span class="qn" style="top:310px">7</span><span class="qn" style="top:319px">8</span><span class="qn" style="top:328px">9</span><span class="qn" style="top:336px">10</span><span class="qn" style="top:345px">11</span><span class="qn" style="top:353px">12</span><span class="qn" style="top:362px">13</span><span class="qn" style="top:371px">14</span><div style="position:absolute;left:662.3px;top:259.8px;width:27px;height:7.8px;background:#fff;border:0.7px solid #222"></div><span class="q" style="left:662.3px;width:26.6px;text-align:right;top:259px;color:#222">~65.0%</span><div style="position:absolute;left:662.3px;top:285.54px;width:27px;height:7.8px;background:#fff;border:0.7px solid #222"></div><span class="q" style="left:662.3px;width:26.6px;text-align:right;top:285px;color:#222">~19.5%</span><div style="position:absolute;left:662.3px;top:337.02px;width:27px;height:7.8px;background:#fff;border:0.7px solid #222"></div><span class="q" style="left:662.3px;width:26.6px;text-align:right;top:336px;color:#222">&lt;0.1%</span><div style="position:absolute;left:662.3px;top:371.34px;width:27px;height:7.8px;background:#fff;border:0.7px solid #222"></div><span class="q" style="left:662.3px;width:26.6px;text-align:right;top:371px;color:#222">&lt;0.1%</span><svg class="qi" style="position:absolute;left:703px;top:287.44px" width="5" height="4.4" viewBox="0 0 5 4.4"><path d="M0.3 0.8h4.4L2.5 3.6z" fill="#555"/></svg><svg class="qi" style="position:absolute;left:703px;top:338.92px" width="5" height="4.4" viewBox="0 0 5 4.4"><path d="M0.3 0.8h4.4L2.5 3.6z" fill="#555"/></svg><span class="q" style="left:712.70px;top:259px"><span class="o">import</span> QtQuick 2.10</span><span class="q" style="left:712.70px;top:268px"><span class="o">import</span> QtQuick.Window 2.10</span><span class="q" style="left:712.70px;top:285px"><span class="p">Window</span> {</span><span class="q" style="left:727.97px;top:293px"><span class="r">visible</span>: true</span><span class="q" style="left:727.97px;top:302px"><span class="r">width</span>: 640</span><span class="q" style="left:727.97px;top:310px"><span class="r">height</span>: 480</span><span class="q" style="left:727.97px;top:319px"><span class="r">title</span>: <span class="b">qsTr</span>(<span class="g">"Hello World"</span>)</span><span class="q" style="left:727.97px;top:336px"><span class="p">Timer</span> {</span><span class="q" style="left:743.24px;top:345px"><span class="o">property</span> <span class="o">int</span> <span class="r">runCount</span>: 0</span><span class="q" style="left:743.24px;top:353px"><span class="r">interval</span>: 2000</span><span class="q" style="left:743.24px;top:362px"><span class="r">repeat</span>: true</span><span class="q" style="left:743.24px;top:371px"><span class="r">running</span>: <i>runCount</i> &lt; 2</span><div style="position:absolute;left:662.7px;top:379.8px;width:349.3px;height:13.6px;background:#404244"></div><span class="t" style="left:664.90px;color:#e4e4e4;font-family:'DejaVu Sans','Liberation Sans',sans-serif;top:381px;font-size:6.37px;">QML Profiler</span><svg class="qi" style="position:absolute;left:709.6px;top:383.6px" width="4.4" height="6.4" viewBox="0 0 4.4 6.4"><path d="M0.4 2.6l1.8-2.2 1.8 2.2zM0.4 3.8l1.8 2.2 1.8-2.2z" fill="#d8d8d8"/></svg><div style="position:absolute;left:716.2px;top:381.6px;width:0.8px;height:10px;background:#5a5c5e"></div><svg class="qi" style="position:absolute;left:719.6px;top:382.5px" width="8" height="8.6" viewBox="0 0 8 8.6"><path d="M0.6 0.6v7.4l6-3.7z" fill="#7cba5c"/><path d="M4 7.6h3.6M5 6.2h2" stroke="#b0b0b0" stroke-width="0.7"/></svg><div style="position:absolute;left:732.7px;top:383.3px;width:7px;height:7px;background:#6a6c6e"></div><div style="position:absolute;left:743px;top:380.2px;width:12.7px;height:13px;background:#2a2c2e"></div><svg class="qi" style="position:absolute;left:745.3px;top:382.8px" width="8" height="8" viewBox="0 0 8 8"><circle cx="4" cy="4" r="3.7" fill="#e8505a"/></svg><svg class="qi" style="position:absolute;left:756.3px;top:384px" width="5" height="4.4" viewBox="0 0 5 4.4"><path d="M0.3 0.8h4.4L2.5 3.6z" fill="#c0c0c0"/></svg><svg class="qi" style="position:absolute;left:763.8px;top:383.1px" width="8.4" height="7.4" viewBox="0 0 8.4 7.4"><path d="M3 0.4v3.4M0.6 6.4l0.8-2.6h3.2l0.8 2.6z" stroke="#d0d0d0" stroke-width="0.8" fill="#d0d0d0"/><path d="M5.6 6.6h2.4" stroke="#d0d0d0" stroke-width="0.8"/></svg><svg class="qi" style="position:absolute;left:777.3px;top:383.1px" width="7.4" height="7.4" viewBox="0 0 7.4 7.4"><circle cx="4.6" cy="2.8" r="2.2" fill="none" stroke="#d0d0d0" stroke-width="0.9"/><path d="M3 4.4l-2.4 2.6" stroke="#d0d0d0" stroke-width="1"/></svg><svg class="qi" style="position:absolute;left:790px;top:383.5px" width="7.6" height="7" viewBox="0 0 7.6 7"><path d="M0.4 0.6h6l-2.2 2.8v3.2l-1.6-0.8v-2.4z" fill="#d8d8d8"/><circle cx="6.8" cy="6.2" r="0.6" fill="#d8d8d8"/></svg><span class="t" style="left:806.50px;color:#e4e4e4;font-family:'DejaVu Sans','Liberation Sans',sans-serif;top:381px;font-size:6.19px;">Elapsed:</span><span class="t" style="left:841.60px;color:#e4e4e4;font-family:'DejaVu Sans','Liberation Sans',sans-serif;top:381px;font-size:6.3px;">8.1 s</span><div style="position:absolute;left:969px;top:381.6px;width:0.8px;height:10px;background:#5a5c5e"></div><span class="t" style="left:976.00px;color:#e4e4e4;font-family:'DejaVu Sans','Liberation Sans',sans-serif;top:381px;font-size:6.56px;"><u>V</u>iews</span><svg class="qi" style="position:absolute;left:1002.7px;top:383.6px" width="7.4" height="6.4" viewBox="0 0 7.4 6.4"><rect x="0.5" y="0.5" width="6.4" height="5.4" fill="none" stroke="#bcbcbc" stroke-width="0.7"/><rect x="2.2" y="2.2" width="3" height="2" fill="none" stroke="#bcbcbc" stroke-width="0.6"/></svg><div style="position:absolute;left:662.7px;top:393.4px;width:349.3px;height:150.4px;background:#fff"></div><div style="position:absolute;left:662.7px;top:393.4px;width:349.3px;height:9.2px;background:linear-gradient(#fafafa,#e9e9e9);border-bottom:0.7px solid #c8c8c8"></div><div style="position:absolute;left:705.9px;top:393.8px;width:0.8px;height:8.2px;background:#c4c4c4"></div><div style="position:absolute;left:736.7px;top:393.8px;width:0.8px;height:8.2px;background:#c4c4c4"></div><div style="position:absolute;left:790.5px;top:393.8px;width:0.8px;height:8.2px;background:#c4c4c4"></div><div style="position:absolute;left:843.1px;top:393.8px;width:0.8px;height:8.2px;background:#c4c4c4"></div><div style="position:absolute;left:897.6px;top:393.8px;width:0.8px;height:8.2px;background:#c4c4c4"></div><div style="position:absolute;left:950.8px;top:393.8px;width:0.8px;height:8.2px;background:#c4c4c4"></div><div style="position:absolute;left:1004.2px;top:393.8px;width:0.8px;height:8.2px;background:#c4c4c4"></div><span class="t" style="left:663.90px;color:#2a2a2a;font-family:'DejaVu Sans','Liberation Sans',sans-serif;top:393px;font-size:6.24px;">Location</span><span class="t" style="left:708.20px;color:#2a2a2a;font-family:'DejaVu Sans','Liberation Sans',sans-serif;top:393px;font-size:6.01px;">Type</span><div style="position:absolute;left:738px;top:393.4px;width:46px;height:9px;overflow:hidden"><div style="position:absolute;left:-738px;top:-393.4px"><span class="t" style="left:738.70px;color:#2a2a2a;font-family:'DejaVu Sans','Liberation Sans',sans-serif;top:393px;font-size:6.38px;">Time in Percent</span></div></div><svg class="qi" style="position:absolute;left:784.8px;top:396.2px" width="4" height="3.6" viewBox="0 0 4 3.6"><path d="M0.3 3L2 0.6 3.7 3z" fill="#444"/></svg><span class="t" style="left:792.80px;color:#2a2a2a;font-family:'DejaVu Sans','Liberation Sans',sans-serif;top:393px;font-size:6.24px;">Total Time</span><div style="position:absolute;left:845px;top:393.4px;width:52.8px;height:9px;overflow:hidden"><div style="position:absolute;left:-845px;top:-393.4px"><span class="t" style="left:845.90px;color:#2a2a2a;font-family:'DejaVu Sans','Liberation Sans',sans-serif;top:393px;font-size:6.38px;">Self Time in Percent</span></div></div><span class="t" style="left:899.40px;color:#2a2a2a;font-family:'DejaVu Sans','Liberation Sans',sans-serif;top:393px;font-size:6.31px;">Self Time</span><span class="t" style="left:952.90px;color:#2a2a2a;font-family:'DejaVu Sans','Liberation Sans',sans-serif;top:393px;font-size:6.49px;">Calls</span><div style="position:absolute;left:1005px;top:393.4px;width:7px;height:90px;overflow:hidden"><div style="position:absolute;left:-1005px;top:-393.4px"><span class="t" style="left:1006.40px;color:#2a2a2a;font-family:'DejaVu Sans','Liberation Sans',sans-serif;top:393px;font-size:6.38px;">Mean</span><span class="t" style="left:1007.4px;top:402px;font-family:'DejaVu Sans','Liberation Sans',sans-serif;font-size:6.38px;color:#222">20</span><span class="t" style="left:1007.4px;top:410px;font-family:'DejaVu Sans','Liberation Sans',sans-serif;font-size:6.38px;color:#222">10</span><span class="t" style="left:1007.4px;top:418px;font-family:'DejaVu Sans','Liberation Sans',sans-serif;font-size:6.38px;color:#222">20</span><span class="t" style="left:1007.4px;top:426px;font-family:'DejaVu Sans','Liberation Sans',sans-serif;font-size:6.38px;color:#222">20</span><span class="t" style="left:1007.4px;top:434px;font-family:'DejaVu Sans','Liberation Sans',sans-serif;font-size:6.38px;color:#222">20</span><span class="t" style="left:1007.4px;top:442px;font-family:'DejaVu Sans','Liberation Sans',sans-serif;font-size:6.38px;color:#222">40</span><span class="t" style="left:1007.4px;top:450px;font-family:'DejaVu Sans','Liberation Sans',sans-serif;font-size:6.38px;color:#222">10</span><span class="t" style="left:1007.4px;top:458px;font-family:'DejaVu Sans','Liberation Sans',sans-serif;font-size:6.38px;color:#222">10</span><span class="t" style="left:1007.4px;top:467px;font-family:'DejaVu Sans','Liberation Sans',sans-serif;font-size:6.38px;color:#222">10</span></div></div><span class="t" style="left:664.0px;top:402px;font-family:'DejaVu Sans','Liberation Sans',sans-serif;font-size:6.38px;color:#222">&lt;program&gt;</span><span class="t" style="left:739.3px;top:402px;font-family:'DejaVu Sans','Liberation Sans',sans-serif;font-size:6.38px;color:#222">100 %</span><span class="t" style="left:793.1px;top:402px;font-family:'DejaVu Sans','Liberation Sans',sans-serif;font-size:6.38px;color:#222">296 ms</span><span class="t" style="left:846.6px;top:402px;font-family:'DejaVu Sans','Liberation Sans',sans-serif;font-size:6.38px;color:#222">0.00 %</span><span class="t" style="left:900.4px;top:402px;font-family:'DejaVu Sans','Liberation Sans',sans-serif;font-size:6.38px;color:#222">0 ns</span><span class="t" style="left:954.6px;top:402px;font-family:'DejaVu Sans','Liberation Sans',sans-serif;font-size:6.38px;color:#222">1</span><span class="t" style="left:664.0px;top:410px;font-family:'DejaVu Sans','Liberation Sans',sans-serif;font-size:6.38px;color:#222">main.qml:0</span><span class="t" style="left:708.5px;top:410px;font-family:'DejaVu Sans','Liberation Sans',sans-serif;font-size:6.38px;color:#222">Compi...</span><span class="t" style="left:739.3px;top:410px;font-family:'DejaVu Sans','Liberation Sans',sans-serif;font-size:6.38px;color:#222">65.01 %</span><span class="t" style="left:793.1px;top:410px;font-family:'DejaVu Sans','Liberation Sans',sans-serif;font-size:6.38px;color:#222">192 ms</span><span class="t" style="left:846.6px;top:410px;font-family:'DejaVu Sans','Liberation Sans',sans-serif;font-size:6.38px;color:#222">65.01 %</span><span class="t" style="left:900.4px;top:410px;font-family:'DejaVu Sans','Liberation Sans',sans-serif;font-size:6.38px;color:#222">192 ms</span><span class="t" style="left:954.6px;top:410px;font-family:'DejaVu Sans','Liberation Sans',sans-serif;font-size:6.38px;color:#222">1</span><span class="t" style="left:664.0px;top:418px;font-family:'DejaVu Sans','Liberation Sans',sans-serif;font-size:6.38px;color:#222">main.qml:4</span><span class="t" style="left:708.5px;top:418px;font-family:'DejaVu Sans','Liberation Sans',sans-serif;font-size:6.38px;color:#222">Creating</span><span class="t" style="left:739.3px;top:418px;font-family:'DejaVu Sans','Liberation Sans',sans-serif;font-size:6.38px;color:#222">19.51 %</span><span class="t" style="left:793.1px;top:418px;font-family:'DejaVu Sans','Liberation Sans',sans-serif;font-size:6.38px;color:#222">57.8 ms</span><span class="t" style="left:846.6px;top:418px;font-family:'DejaVu Sans','Liberation Sans',sans-serif;font-size:6.38px;color:#222">19.48 %</span><span class="t" style="left:900.4px;top:418px;font-family:'DejaVu Sans','Liberation Sans',sans-serif;font-size:6.38px;color:#222">57.7 ms</span><span class="t" style="left:954.6px;top:418px;font-family:'DejaVu Sans','Liberation Sans',sans-serif;font-size:6.38px;color:#222">2</span><span class="t" style="left:664.0px;top:426px;font-family:'DejaVu Sans','Liberation Sans',sans-serif;font-size:6.38px;color:#222">main.qml:15</span><span class="t" style="left:708.5px;top:426px;font-family:'DejaVu Sans','Liberation Sans',sans-serif;font-size:6.38px;color:#222">Handli...</span><span class="t" style="left:739.3px;top:426px;font-family:'DejaVu Sans','Liberation Sans',sans-serif;font-size:6.38px;color:#222">15.46 %</span><span class="t" style="left:793.1px;top:426px;font-family:'DejaVu Sans','Liberation Sans',sans-serif;font-size:6.38px;color:#222">45.8 ms</span><span class="t" style="left:846.6px;top:426px;font-family:'DejaVu Sans','Liberation Sans',sans-serif;font-size:6.38px;color:#222">0.01 %</span><span class="t" style="left:900.4px;top:426px;font-family:'DejaVu Sans','Liberation Sans',sans-serif;font-size:6.38px;color:#222">24.4 µs</span><span class="t" style="left:954.6px;top:426px;font-family:'DejaVu Sans','Liberation Sans',sans-serif;font-size:6.38px;color:#222">2</span><span class="t" style="left:664.0px;top:434px;font-family:'DejaVu Sans','Liberation Sans',sans-serif;font-size:6.38px;color:#222">main.qml:15</span><span class="t" style="left:708.5px;top:434px;font-family:'DejaVu Sans','Liberation Sans',sans-serif;font-size:6.38px;color:#222">JavaS...</span><span class="t" style="left:739.3px;top:434px;font-family:'DejaVu Sans','Liberation Sans',sans-serif;font-size:6.38px;color:#222">15.46 %</span><span class="t" style="left:793.1px;top:434px;font-family:'DejaVu Sans','Liberation Sans',sans-serif;font-size:6.38px;color:#222">45.8 ms</span><span class="t" style="left:846.6px;top:434px;font-family:'DejaVu Sans','Liberation Sans',sans-serif;font-size:6.38px;color:#222">15.45 %</span><span class="t" style="left:900.4px;top:434px;font-family:'DejaVu Sans','Liberation Sans',sans-serif;font-size:6.38px;color:#222">45.7 ms</span><span class="t" style="left:954.6px;top:434px;font-family:'DejaVu Sans','Liberation Sans',sans-serif;font-size:6.38px;color:#222">2</span><span class="t" style="left:664.0px;top:442px;font-family:'DejaVu Sans','Liberation Sans',sans-serif;font-size:6.38px;color:#222">main.qml:10</span><span class="t" style="left:708.5px;top:442px;font-family:'DejaVu Sans','Liberation Sans',sans-serif;font-size:6.38px;color:#222">Creating</span><span class="t" style="left:739.3px;top:442px;font-family:'DejaVu Sans','Liberation Sans',sans-serif;font-size:6.38px;color:#222">0.03 %</span><span class="t" style="left:793.1px;top:442px;font-family:'DejaVu Sans','Liberation Sans',sans-serif;font-size:6.38px;color:#222">93.8 µs</span><span class="t" style="left:846.6px;top:442px;font-family:'DejaVu Sans','Liberation Sans',sans-serif;font-size:6.38px;color:#222">0.03 %</span><span class="t" style="left:900.4px;top:442px;font-family:'DejaVu Sans','Liberation Sans',sans-serif;font-size:6.38px;color:#222">93.8 µs</span><span class="t" style="left:954.6px;top:442px;font-family:'DejaVu Sans','Liberation Sans',sans-serif;font-size:6.38px;color:#222">2</span><span class="t" style="left:664.0px;top:450px;font-family:'DejaVu Sans','Liberation Sans',sans-serif;font-size:6.38px;color:#222">main.qml:14</span><span class="t" style="left:708.5px;top:450px;font-family:'DejaVu Sans','Liberation Sans',sans-serif;font-size:6.38px;color:#222">Binding</span><span class="t" style="left:739.3px;top:450px;font-family:'DejaVu Sans','Liberation Sans',sans-serif;font-size:6.38px;color:#222">0.01 %</span><span class="t" style="left:793.1px;top:450px;font-family:'DejaVu Sans','Liberation Sans',sans-serif;font-size:6.38px;color:#222">43.2 µs</span><span class="t" style="left:846.6px;top:450px;font-family:'DejaVu Sans','Liberation Sans',sans-serif;font-size:6.38px;color:#222">0.01 %</span><span class="t" style="left:900.4px;top:450px;font-family:'DejaVu Sans','Liberation Sans',sans-serif;font-size:6.38px;color:#222">38.2 µs</span><span class="t" style="left:954.6px;top:450px;font-family:'DejaVu Sans','Liberation Sans',sans-serif;font-size:6.38px;color:#222">3</span><span class="t" style="left:664.0px;top:458px;font-family:'DejaVu Sans','Liberation Sans',sans-serif;font-size:6.38px;color:#222">&lt;bytecode&gt;</span><span class="t" style="left:708.5px;top:458px;font-family:'DejaVu Sans','Liberation Sans',sans-serif;font-size:6.38px;color:#222">Binding</span><span class="t" style="left:739.3px;top:458px;font-family:'DejaVu Sans','Liberation Sans',sans-serif;font-size:6.38px;color:#222">0.00 %</span><span class="t" style="left:793.1px;top:458px;font-family:'DejaVu Sans','Liberation Sans',sans-serif;font-size:6.38px;color:#222">13.4 µs</span><span class="t" style="left:846.6px;top:458px;font-family:'DejaVu Sans','Liberation Sans',sans-serif;font-size:6.38px;color:#222">0.00 %</span><span class="t" style="left:900.4px;top:458px;font-family:'DejaVu Sans','Liberation Sans',sans-serif;font-size:6.38px;color:#222">13.4 µs</span><span class="t" style="left:954.6px;top:458px;font-family:'DejaVu Sans','Liberation Sans',sans-serif;font-size:6.38px;color:#222">1</span><span class="t" style="left:664.0px;top:467px;font-family:'DejaVu Sans','Liberation Sans',sans-serif;font-size:6.38px;color:#222">main.qml:14</span><span class="t" style="left:708.5px;top:467px;font-family:'DejaVu Sans','Liberation Sans',sans-serif;font-size:6.38px;color:#222">JavaS...</span><span class="t" style="left:739.3px;top:467px;font-family:'DejaVu Sans','Liberation Sans',sans-serif;font-size:6.38px;color:#222">0.00 %</span><span class="t" style="left:793.1px;top:467px;font-family:'DejaVu Sans','Liberation Sans',sans-serif;font-size:6.38px;color:#222">5.01 µs</span><span class="t" style="left:846.6px;top:467px;font-family:'DejaVu Sans','Liberation Sans',sans-serif;font-size:6.38px;color:#222">0.00 %</span><span class="t" style="left:900.4px;top:467px;font-family:'DejaVu Sans','Liberation Sans',sans-serif;font-size:6.38px;color:#222">5.01 µs</span><span class="t" style="left:954.6px;top:467px;font-family:'DejaVu Sans','Liberation Sans',sans-serif;font-size:6.38px;color:#222">3</span><div style="position:absolute;left:662.7px;top:482.4px;width:349.3px;height:7.4px;background:#dadada"></div><div style="position:absolute;left:662.7px;top:482.4px;width:7.4px;height:7.4px;background:#f0f0f0"></div><div style="position:absolute;left:1004.6px;top:482.4px;width:7.4px;height:7.4px;background:#f0f0f0"></div><div style="position:absolute;left:670.2px;top:482.4px;width:258.8px;height:7.4px;background:#f2f2f2;border:0.5px solid #d0d0d0"></div><svg class="qi" style="position:absolute;left:664.4px;top:483.5px" width="4" height="5" viewBox="0 0 4 5"><path d="M3.2 0.4L0.6 2.5l2.6 2.1z" fill="#444"/></svg><svg class="qi" style="position:absolute;left:1006.3px;top:483.5px" width="4" height="5" viewBox="0 0 4 5"><path d="M0.8 0.4L3.4 2.5l-2.6 2.1z" fill="#444"/></svg><div style="position:absolute;left:662.7px;top:490.9px;width:174.4px;height:9px;background:linear-gradient(#fafafa,#e9e9e9);border-bottom:0.7px solid #c8c8c8"></div><div style="position:absolute;left:838px;top:490.9px;width:174px;height:9px;background:linear-gradient(#fafafa,#e9e9e9);border-bottom:0.7px solid #c8c8c8"></div><div style="position:absolute;left:837.1px;top:490.9px;width:0.9px;height:38px;background:#333"></div><div style="position:absolute;left:714.7px;top:491.3px;width:0.8px;height:8.2px;background:#c4c4c4"></div><div style="position:absolute;left:768.2px;top:491.3px;width:0.8px;height:8.2px;background:#c4c4c4"></div><div style="position:absolute;left:822.1px;top:491.3px;width:0.8px;height:8.2px;background:#c4c4c4"></div><div style="position:absolute;left:891.1px;top:491.3px;width:0.8px;height:8.2px;background:#c4c4c4"></div><div style="position:absolute;left:944.6px;top:491.3px;width:0.8px;height:8.2px;background:#c4c4c4"></div><div style="position:absolute;left:998.4px;top:491.3px;width:0.8px;height:8.2px;background:#c4c4c4"></div><span class="t" style="left:664.30px;color:#2a2a2a;font-family:'DejaVu Sans','Liberation Sans',sans-serif;top:490px;font-size:6.22px;">Caller</span><span class="t" style="left:717.00px;color:#2a2a2a;font-family:'DejaVu Sans','Liberation Sans',sans-serif;top:490px;font-size:6.09px;">Type</span><span class="t" style="left:771.00px;color:#2a2a2a;font-family:'DejaVu Sans','Liberation Sans',sans-serif;top:490px;font-size:6.37px;">Total Time</span><svg class="qi" style="position:absolute;left:816.3px;top:493.4px" width="4" height="3.6" viewBox="0 0 4 3.6"><path d="M0.3 3L2 0.6 3.7 3z" fill="#444"/></svg><div style="position:absolute;left:823px;top:490.9px;width:13.8px;height:9px;overflow:hidden"><div style="position:absolute;left:-823px;top:-490.9px"><span class="t" style="left:824.50px;color:#2a2a2a;font-family:'DejaVu Sans','Liberation Sans',sans-serif;top:490px;font-size:6.38px;">Calls</span></div></div><span class="t" style="left:839.00px;color:#2a2a2a;font-family:'DejaVu Sans','Liberation Sans',sans-serif;top:490px;font-size:6.36px;">Callee</span><span class="t" style="left:893.20px;color:#2a2a2a;font-family:'DejaVu Sans','Liberation Sans',sans-serif;top:490px;font-size:6.44px;">Type</span><span class="t" style="left:946.70px;color:#2a2a2a;font-family:'DejaVu Sans','Liberation Sans',sans-serif;top:490px;font-size:6.3px;">Total Time</span><svg class="qi" style="position:absolute;left:992.3px;top:493.4px" width="4" height="3.6" viewBox="0 0 4 3.6"><path d="M0.3 3L2 0.6 3.7 3z" fill="#444"/></svg><div style="position:absolute;left:999px;top:490.9px;width:13px;height:9px;overflow:hidden"><div style="position:absolute;left:-999px;top:-490.9px"><span class="t" style="left:1000.20px;color:#2a2a2a;font-family:'DejaVu Sans','Liberation Sans',sans-serif;top:490px;font-size:6.38px;">Calls</span></div></div><div style="position:absolute;left:662.7px;top:521.8px;width:174.1px;height:7.4px;background:#dadada"></div><div style="position:absolute;left:662.7px;top:521.8px;width:7.4px;height:7.4px;background:#f0f0f0"></div><div style="position:absolute;left:829.4px;top:521.8px;width:7.4px;height:7.4px;background:#f0f0f0"></div><div style="position:absolute;left:670.2px;top:521.8px;width:103.8px;height:7.4px;background:#f2f2f2;border:0.5px solid #d0d0d0"></div><svg class="qi" style="position:absolute;left:664.4px;top:522.9px" width="4" height="5" viewBox="0 0 4 5"><path d="M3.2 0.4L0.6 2.5l2.6 2.1z" fill="#444"/></svg><svg class="qi" style="position:absolute;left:831.1px;top:522.9px" width="4" height="5" viewBox="0 0 4 5"><path d="M0.8 0.4L3.4 2.5l-2.6 2.1z" fill="#444"/></svg><div style="position:absolute;left:838px;top:521.8px;width:174px;height:7.4px;background:#dadada"></div><div style="position:absolute;left:838px;top:521.8px;width:7.4px;height:7.4px;background:#f0f0f0"></div><div style="position:absolute;left:1004.6px;top:521.8px;width:7.4px;height:7.4px;background:#f0f0f0"></div><div style="position:absolute;left:845.6px;top:521.8px;width:103.8px;height:7.4px;background:#f2f2f2;border:0.5px solid #d0d0d0"></div><svg class="qi" style="position:absolute;left:839.7px;top:522.9px" width="4" height="5" viewBox="0 0 4 5"><path d="M3.2 0.4L0.6 2.5l2.6 2.1z" fill="#444"/></svg><svg class="qi" style="position:absolute;left:1006.3px;top:522.9px" width="4" height="5" viewBox="0 0 4 5"><path d="M0.8 0.4L3.4 2.5l-2.6 2.1z" fill="#444"/></svg><div style="position:absolute;left:662.7px;top:529.4px;width:349.3px;height:14.4px;background:#efefef;border-top:0.6px solid #c8c8c8"></div><div style="position:absolute;left:663.4px;top:530px;width:38.4px;height:12px;background:#d9d9d9;border:0.6px solid #c0c0c0;border-top:none"></div><div style="position:absolute;left:702.6px;top:530px;width:54px;height:12px;background:#d9d9d9;border:0.6px solid #c0c0c0;border-top:none"></div><div style="position:absolute;left:757.4px;top:529.4px;width:42px;height:13.6px;background:#f2f2f2;border:0.6px solid #c0c0c0;border-top:none"></div><span class="t" style="left:668.50px;color:#2a2a2a;font-family:'DejaVu Sans','Liberation Sans',sans-serif;top:530px;font-size:6.47px;">Timeline</span><span class="t" style="left:709.20px;color:#2a2a2a;font-family:'DejaVu Sans','Liberation Sans',sans-serif;top:530px;font-size:6.38px;">Flame Graph</span><span class="t" style="left:763.40px;color:#2a2a2a;font-family:'DejaVu Sans','Liberation Sans',sans-serif;top:531px;font-size:6.5px;">Statistics</span><div style="position:absolute;left:566.3px;top:543.8px;width:445.7px;height:13.6px;background:#404244"></div><div style="position:absolute;left:567.9px;top:544.4px;width:12.1px;height:13px;background:#2a2c2e"></div><svg class="qi" style="position:absolute;left:570.6px;top:547.2px" width="6.8" height="6.8" viewBox="0 0 6.8 6.8"><rect x="0.5" y="0.5" width="5.8" height="5.8" fill="none" stroke="#e0e0e0" stroke-width="0.9"/><rect x="0.5" y="0.5" width="2.6" height="5.8" fill="#e0e0e0"/></svg><div style="position:absolute;left:583.9px;top:545.4px;width:107.2px;height:10.4px;background:#fff;border:0.6px solid #888"></div><svg class="qi" style="position:absolute;left:586.1px;top:547.2px" width="9.4" height="7.2" viewBox="0 0 9.4 7.2"><circle cx="4.2" cy="2.8" r="2.1" fill="none" stroke="#555" stroke-width="0.9"/><path d="M2.8 4.3l-2.2 2.4" stroke="#555" stroke-width="1"/><path d="M7 5.6l1 1 1-1z" fill="#555"/></svg><span class="t" style="left:598.40px;color:#8a8a8a;font-family:'DejaVu Sans','Liberation Sans',sans-serif;top:545px;font-size:6.38px;">Type to locate (Ctrl+K)</span><span class="t" style="left:697.80px;color:#e2e2e2;font-family:'DejaVu Sans','Liberation Sans',sans-serif;top:545px;font-size:6.17px;">1  Issues</span><span class="t" style="left:733.00px;color:#e2e2e2;font-family:'DejaVu Sans','Liberation Sans',sans-serif;top:545px;font-size:6.36px;">2  Sea...</span><span class="t" style="left:768.00px;color:#e2e2e2;font-family:'DejaVu Sans','Liberation Sans',sans-serif;top:545px;font-size:6.42px;">3  App...</span><span class="t" style="left:803.50px;color:#e2e2e2;font-family:'DejaVu Sans','Liberation Sans',sans-serif;top:545px;font-size:6.17px;">4  Co...</span><span class="t" style="left:839.00px;color:#e2e2e2;font-family:'DejaVu Sans','Liberation Sans',sans-serif;top:545px;font-size:6.43px;">5  QM...</span><span class="t" style="left:874.60px;color:#e2e2e2;font-family:'DejaVu Sans','Liberation Sans',sans-serif;top:545px;font-size:6.24px;">6  Gen...</span><span class="t" style="left:910.40px;color:#e2e2e2;font-family:'DejaVu Sans','Liberation Sans',sans-serif;top:545px;font-size:6.27px;">8  Test...</span><svg class="qi" style="position:absolute;left:946.2px;top:547.4px" width="4.4" height="6.4" viewBox="0 0 4.4 6.4"><path d="M0.4 2.6l1.8-2.2 1.8 2.2zM0.4 3.8l1.8 2.2 1.8-2.2z" fill="#d8d8d8"/></svg><div style="position:absolute;left:970px;top:544.6px;width:13px;height:12px;background:#2a2c2e"></div><svg class="qi" style="position:absolute;left:972.1px;top:547.6px" width="8.6" height="6.4" viewBox="0 0 8.6 6.4"><path d="M0.6 4.6h7.4" stroke="#d8d8d8" stroke-width="1.6"/><path d="M5 2.6h2.6v-1.6" stroke="#d8d8d8" stroke-width="0.7" fill="none"/></svg><svg class="qi" style="position:absolute;left:988.8px;top:547.1px" width="7.6" height="7" viewBox="0 0 7.6 7"><rect x="0.5" y="0.5" width="6.6" height="6" fill="none" stroke="#6a6c6e" stroke-width="0.9"/><rect x="4.5" y="0.5" width="2.6" height="6" fill="#6a6c6e"/></svg>
</div>
</body></html>
